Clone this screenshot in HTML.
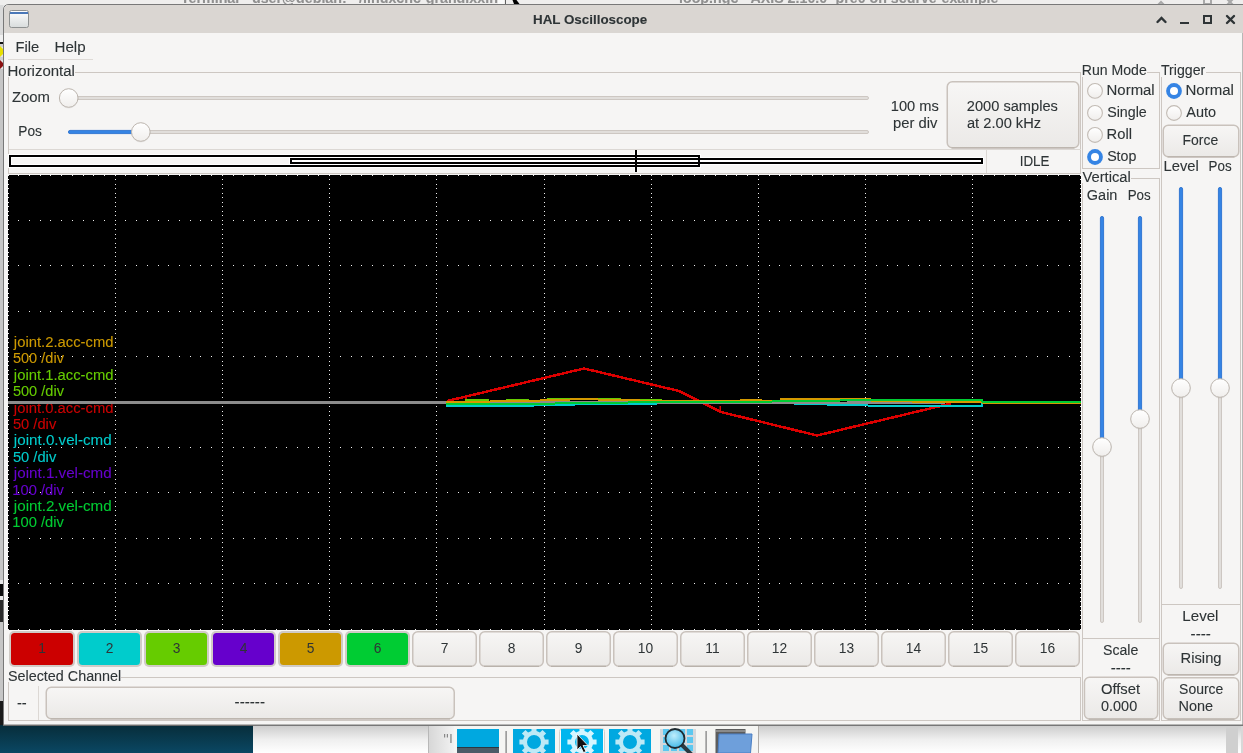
<!DOCTYPE html>
<html><head><meta charset="utf-8"><style>
html,body{margin:0;padding:0;width:1243px;height:753px;overflow:hidden;background:#0e4055}
svg{display:block;will-change:transform}
text{font-family:"Liberation Sans",sans-serif}
</style></head><body>
<svg width="1243" height="753" viewBox="0 0 1243 753">
<defs><linearGradient id="teal" x1="0" y1="0" x2="0" y2="1"><stop offset="0" stop-color="#072d3a"/><stop offset="1" stop-color="#0a4763"/></linearGradient><linearGradient id="panel" x1="0" y1="0" x2="0" y2="1"><stop offset="0" stop-color="#cfcfcf"/><stop offset="0.6" stop-color="#f4f4f4"/><stop offset="1" stop-color="#ffffff"/></linearGradient><linearGradient id="btn" x1="0" y1="0" x2="0" y2="1"><stop offset="0" stop-color="#f7f6f5"/><stop offset="1" stop-color="#ebe9e7"/></linearGradient><linearGradient id="knob" x1="0" y1="0" x2="0" y2="1"><stop offset="0" stop-color="#ffffff"/><stop offset="1" stop-color="#f0eeec"/></linearGradient><linearGradient id="wicon" x1="0" y1="0" x2="0" y2="1"><stop offset="0" stop-color="#ffffff"/><stop offset="1" stop-color="#d8dcdc"/></linearGradient></defs>
<rect x="0" y="0" width="1243" height="753" fill="#e4e4e4" />
<rect x="0" y="0" width="1243" height="5" fill="#efeeed" />
<text x="180.84" y="3.4" font-size="14.5" fill="#909090" textLength="317.04" lengthAdjust="spacingAndGlyphs" font-weight="bold" stroke="#909090" stroke-width="0.1" >Terminal - user@debian: ~/linuxcnc-grandixxin</text>
<text x="679.01" y="3.4" font-size="14.5" fill="#909090" textLength="319.48" lengthAdjust="spacingAndGlyphs" font-weight="bold" stroke="#909090" stroke-width="0.1" >loop.ngc - AXIS 2.10.0~pre0 on scurve-example</text>
<g fill="none" stroke="#a8a8a8" stroke-width="2"><path d="M1157 6 L1161 2 L1165 6"/><rect x="1204" y="-3" width="7" height="7"/><path d="M1226 -2 L1234 6 M1234 -2 L1226 6"/></g>
<rect x="498" y="0" width="6" height="4" fill="#fafafa" />
<rect x="505" y="0" width="1" height="4" fill="#606060" />
<path d="M512.5 0 H516.5 L519.5 4 H514 Z" fill="#000"/>
<rect x="0" y="5" width="3" height="30" fill="#dadada" />
<rect x="0" y="35" width="3" height="7" fill="#f0f0f0" />
<rect x="0" y="42" width="3" height="2" fill="#111" />
<rect x="0" y="44" width="3" height="3" fill="#d0d0d0" />
<path d="M0 46 L3 49 V54 L0 57 Z" fill="#e8e000"/>
<rect x="0" y="57" width="3" height="3" fill="#d0d0d0" />
<path d="M0 60 L3 63 V66 L0 69 Z" fill="#8a1010"/>
<rect x="0" y="69" width="3" height="632" fill="#c6c6c6" />
<rect x="0" y="580" width="3" height="4" fill="#e8e8e8" />
<rect x="0" y="584" width="3" height="12" fill="#0a0a0a" />
<rect x="0" y="596" width="3" height="4" fill="#e8e8e8" />
<rect x="0" y="600" width="3" height="22" fill="#2a2a2a" />
<rect x="0" y="701" width="3" height="24" fill="#1a1a1a" />
<rect x="0" y="725" width="253" height="28" fill="url(#teal)" />
<path d="M3.5 725 V10 Q3.5 4.5 9 4.5 H1243 V725 Z" fill="#f6f5f4" stroke="#787878" stroke-width="1"/>
<path d="M4 33 V10 Q4 5 9 5 H1243 V33 Z" fill="#dad6d2"/>
<rect x="3" y="725" width="1240" height="1" fill="#6a6a6a" />
<rect x="9.5" y="10.5" width="19" height="17" rx="2" fill="url(#wicon)" stroke="#8e9191" stroke-width="1"/>
<rect x="10" y="12" width="18" height="2" fill="#4a78b8" />
<text x="533.01" y="23.9" font-size="12.7" fill="#2e3436" textLength="114.25" lengthAdjust="spacingAndGlyphs" font-weight="bold" stroke="#2e3436" stroke-width="0.1" >HAL Oscilloscope</text>
<path d="M1157.5 22 L1161.5 18 L1165.5 22" fill="none" stroke="#2e3436" stroke-width="2.4" stroke-linecap="round"/>
<rect x="1180" y="22" width="9" height="2" fill="#2e3436" />
<rect x="1204" y="16" width="7" height="7" fill="none" stroke="#2e3436" stroke-width="2"/>
<path d="M1227 16 L1234 23 M1234 16 L1227 23" fill="none" stroke="#2e3436" stroke-width="2.4" stroke-linecap="round"/>
<text x="15.5" y="51.8" font-size="13.8" fill="#2e3436" textLength="23.66" lengthAdjust="spacingAndGlyphs" stroke="#2e3436" stroke-width="0.1" >File</text>
<text x="54.56" y="51.8" font-size="13.8" fill="#2e3436" textLength="31.07" lengthAdjust="spacingAndGlyphs" stroke="#2e3436" stroke-width="0.1" >Help</text>
<rect x="8" y="59" width="85" height="1" fill="#dedad6" />
<text x="7.51" y="76.0" font-size="13.8" fill="#2e3436" textLength="67.39" lengthAdjust="spacingAndGlyphs" stroke="#2e3436" stroke-width="0.1" >Horizontal</text>
<rect x="75" y="72" width="1006" height="1" fill="#cdc7c2" />
<rect x="8" y="77" width="1" height="96" fill="#cdc7c2" />
<rect x="1080" y="72" width="1" height="101" fill="#cdc7c2" />
<rect x="8" y="173" width="1073" height="1" fill="#cdc7c2" />
<text x="12.03" y="102" font-size="13.8" fill="#2e3436" textLength="38.0" lengthAdjust="spacingAndGlyphs" stroke="#2e3436" stroke-width="0.1" >Zoom</text>
<text x="18.28" y="135.8" font-size="13.8" fill="#2e3436" textLength="23.62" lengthAdjust="spacingAndGlyphs" stroke="#2e3436" stroke-width="0.1" >Pos</text>
<rect x="68.5" y="96.5" width="800" height="3" rx="1.5" fill="#e1dedb" stroke="#cdc7c2" stroke-width="1"/>
<circle cx="68.7" cy="98.6" r="9.8" fill="#000" opacity="0.06"/>
<circle cx="68.7" cy="98" r="9.3" fill="url(#knob)" stroke="#bdb6af" stroke-width="1"/>
<rect x="68.5" y="130.5" width="800" height="3" rx="1.5" fill="#e1dedb" stroke="#cdc7c2" stroke-width="1"/>
<rect x="68.4" y="130.4" width="72.00000000000001" height="3.2" rx="1.6" fill="#3584e4" stroke="#2470d4" stroke-width="0.8"/>
<circle cx="140.8" cy="132.6" r="9.8" fill="#000" opacity="0.06"/>
<circle cx="140.8" cy="132" r="9.3" fill="url(#knob)" stroke="#bdb6af" stroke-width="1"/>
<text x="890.78" y="110.9" font-size="13.8" fill="#2e3436" textLength="48.05" lengthAdjust="spacingAndGlyphs" stroke="#2e3436" stroke-width="0.1" >100 ms</text>
<text x="892.95" y="127.9" font-size="13.8" fill="#2e3436" textLength="44.4" lengthAdjust="spacingAndGlyphs" stroke="#2e3436" stroke-width="0.1" >per div</text>
<rect x="947.25" y="81.75" width="131.5" height="66.0" rx="5" fill="url(#btn)" stroke="#c9c2bc" stroke-width="1.5"/>
<path d="M951.5 147.9 H1074.5" stroke="#b9b2ab" stroke-width="1.2"/>
<text x="966.87" y="110.7" font-size="13.8" fill="#2e3436" textLength="90.96" lengthAdjust="spacingAndGlyphs" stroke="#2e3436" stroke-width="0.1" >2000 samples</text>
<text x="966.98" y="127.6" font-size="13.8" fill="#2e3436" textLength="74.15" lengthAdjust="spacingAndGlyphs" stroke="#2e3436" stroke-width="0.1" >at 2.00 kHz</text>
<rect x="9" y="149" width="1072" height="1" fill="#dcd8d4" />
<rect x="986" y="150" width="1" height="23" fill="#dcd8d4" />
<text x="1019.66" y="165.9" font-size="13.8" fill="#2e3436" textLength="29.81" lengthAdjust="spacingAndGlyphs" stroke="#2e3436" stroke-width="0.1" >IDLE</text>
<g fill="none" stroke="#fff" stroke-width="4"><rect x="10" y="156" width="689" height="10"/><rect x="291" y="159" width="691" height="4"/><line x1="636" y1="150" x2="636" y2="172"/></g>
<g fill="none" stroke="#000" stroke-width="2"><rect x="10" y="156" width="689" height="10"/><rect x="291" y="159" width="691" height="4"/><line x1="636" y1="150" x2="636" y2="172"/></g>
<text x="1081.85" y="74.75" font-size="13.8" fill="#2e3436" textLength="64.88" lengthAdjust="spacingAndGlyphs" stroke="#2e3436" stroke-width="0.1" >Run Mode</text>
<rect x="1147" y="72" width="13" height="1" fill="#cdc7c2" />
<rect x="1082" y="77" width="1" height="92" fill="#cdc7c2" />
<rect x="1159" y="72" width="1" height="97" fill="#cdc7c2" />
<rect x="1082" y="168" width="78" height="1" fill="#cdc7c2" />
<circle cx="1095" cy="90.9" r="7.4" fill="url(#knob)" stroke="#c2bbb4" stroke-width="1.1"/>
<text x="1106.58" y="94.75" font-size="13.8" fill="#2e3436" textLength="48.12" lengthAdjust="spacingAndGlyphs" stroke="#2e3436" stroke-width="0.1" >Normal</text>
<circle cx="1095" cy="112.93" r="7.4" fill="url(#knob)" stroke="#c2bbb4" stroke-width="1.1"/>
<text x="1107.15" y="116.78" font-size="13.8" fill="#2e3436" textLength="39.58" lengthAdjust="spacingAndGlyphs" stroke="#2e3436" stroke-width="0.1" >Single</text>
<circle cx="1095" cy="134.96" r="7.4" fill="url(#knob)" stroke="#c2bbb4" stroke-width="1.1"/>
<text x="1106.59" y="138.81" font-size="13.8" fill="#2e3436" textLength="25.4" lengthAdjust="spacingAndGlyphs" stroke="#2e3436" stroke-width="0.1" >Roll</text>
<circle cx="1095" cy="156.99" r="7.9" fill="#3584e4"/>
<circle cx="1095" cy="156.99" r="4" fill="#fff"/>
<text x="1107.15" y="160.84" font-size="13.8" fill="#2e3436" textLength="29.24" lengthAdjust="spacingAndGlyphs" stroke="#2e3436" stroke-width="0.1" >Stop</text>
<text x="1160.99" y="74.75" font-size="13.8" fill="#2e3436" textLength="44.25" lengthAdjust="spacingAndGlyphs" stroke="#2e3436" stroke-width="0.1" >Trigger</text>
<rect x="1206" y="72" width="35" height="1" fill="#cdc7c2" />
<rect x="1161" y="77" width="1" height="644" fill="#cdc7c2" />
<rect x="1240" y="72" width="1" height="649" fill="#cdc7c2" />
<circle cx="1174" cy="91" r="7.9" fill="#3584e4"/>
<circle cx="1174" cy="91" r="4" fill="#fff"/>
<text x="1185.47" y="94.75" font-size="13.8" fill="#2e3436" textLength="48.44" lengthAdjust="spacingAndGlyphs" stroke="#2e3436" stroke-width="0.1" >Normal</text>
<circle cx="1174" cy="113" r="7.4" fill="url(#knob)" stroke="#c2bbb4" stroke-width="1.1"/>
<text x="1186.27" y="116.8" font-size="13.8" fill="#2e3436" textLength="29.74" lengthAdjust="spacingAndGlyphs" stroke="#2e3436" stroke-width="0.1" >Auto</text>
<rect x="1163.25" y="125.25" width="75.5" height="31.5" rx="5" fill="url(#btn)" stroke="#c9c2bc" stroke-width="1.5"/>
<path d="M1167.5 156.9 H1234.5" stroke="#b9b2ab" stroke-width="1.2"/>
<text x="1182.56" y="144.9" font-size="13.8" fill="#2e3436" textLength="35.66" lengthAdjust="spacingAndGlyphs" stroke="#2e3436" stroke-width="0.1" >Force</text>
<text x="1163.59" y="170.6" font-size="13.8" fill="#2e3436" textLength="35.19" lengthAdjust="spacingAndGlyphs" stroke="#2e3436" stroke-width="0.1" >Level</text>
<text x="1208.5" y="170.6" font-size="13.8" fill="#2e3436" textLength="23.08" lengthAdjust="spacingAndGlyphs" stroke="#2e3436" stroke-width="0.1" >Pos</text>
<rect x="1179.5" y="187.5" width="3" height="401" rx="1.5" fill="#e1dedb" stroke="#cdc7c2" stroke-width="1"/>
<rect x="1179.4" y="187.4" width="3.2" height="200.2" rx="1.6" fill="#3584e4" stroke="#2470d4" stroke-width="0.8"/>
<circle cx="1181" cy="388.6" r="9.8" fill="#000" opacity="0.06"/>
<circle cx="1181" cy="388" r="9.3" fill="url(#knob)" stroke="#bdb6af" stroke-width="1"/>
<rect x="1218.5" y="187.5" width="3" height="401" rx="1.5" fill="#e1dedb" stroke="#cdc7c2" stroke-width="1"/>
<rect x="1218.4" y="187.4" width="3.2" height="200.2" rx="1.6" fill="#3584e4" stroke="#2470d4" stroke-width="0.8"/>
<circle cx="1220" cy="388.6" r="9.8" fill="#000" opacity="0.06"/>
<circle cx="1220" cy="388" r="9.3" fill="url(#knob)" stroke="#bdb6af" stroke-width="1"/>
<rect x="1162" y="604" width="78" height="1" fill="#cdc7c2" />
<text x="1182.36" y="621" font-size="13.8" fill="#2e3436" textLength="36.05" lengthAdjust="spacingAndGlyphs" stroke="#2e3436" stroke-width="0.1" >Level</text>
<text x="1190.62" y="639.2" font-size="13.8" fill="#2e3436" textLength="20.25" lengthAdjust="spacingAndGlyphs" stroke="#2e3436" stroke-width="0.1" >----</text>
<rect x="1163.25" y="643.25" width="75.5" height="31.5" rx="5" fill="url(#btn)" stroke="#c9c2bc" stroke-width="1.5"/>
<path d="M1167.5 674.9 H1234.5" stroke="#b9b2ab" stroke-width="1.2"/>
<text x="1180.59" y="663.2" font-size="13.8" fill="#2e3436" textLength="40.96" lengthAdjust="spacingAndGlyphs" stroke="#2e3436" stroke-width="0.1" >Rising</text>
<rect x="1163.25" y="677.75" width="75.5" height="41.200000000000045" rx="5" fill="url(#btn)" stroke="#c9c2bc" stroke-width="1.5"/>
<path d="M1167.5 719.1 H1234.5" stroke="#b9b2ab" stroke-width="1.2"/>
<text x="1179.07" y="693.8" font-size="13.8" fill="#2e3436" textLength="44.25" lengthAdjust="spacingAndGlyphs" stroke="#2e3436" stroke-width="0.1" >Source</text>
<text x="1178.52" y="710.8" font-size="13.8" fill="#2e3436" textLength="34.53" lengthAdjust="spacingAndGlyphs" stroke="#2e3436" stroke-width="0.1" >None</text>
<rect x="1161" y="720" width="80" height="1" fill="#cdc7c2" />
<text x="1082.44" y="181.95" font-size="13.8" fill="#2e3436" textLength="48.33" lengthAdjust="spacingAndGlyphs" stroke="#2e3436" stroke-width="0.1" >Vertical</text>
<rect x="1131" y="178" width="29" height="1" fill="#cdc7c2" />
<rect x="1082" y="183" width="1" height="538" fill="#cdc7c2" />
<rect x="1159" y="178" width="1" height="543" fill="#cdc7c2" />
<rect x="1082" y="720" width="78" height="1" fill="#cdc7c2" />
<text x="1086.87" y="199.9" font-size="13.8" fill="#2e3436" textLength="30.57" lengthAdjust="spacingAndGlyphs" stroke="#2e3436" stroke-width="0.1" >Gain</text>
<text x="1127.7" y="199.9" font-size="13.8" fill="#2e3436" textLength="23.03" lengthAdjust="spacingAndGlyphs" stroke="#2e3436" stroke-width="0.1" >Pos</text>
<rect x="1100.5" y="216.5" width="3" height="406" rx="1.5" fill="#e1dedb" stroke="#cdc7c2" stroke-width="1"/>
<rect x="1100.4" y="216.4" width="3.2" height="230.2" rx="1.6" fill="#3584e4" stroke="#2470d4" stroke-width="0.8"/>
<circle cx="1102" cy="447.6" r="9.8" fill="#000" opacity="0.06"/>
<circle cx="1102" cy="447" r="9.3" fill="url(#knob)" stroke="#bdb6af" stroke-width="1"/>
<rect x="1138.5" y="216.5" width="3" height="406" rx="1.5" fill="#e1dedb" stroke="#cdc7c2" stroke-width="1"/>
<rect x="1138.4" y="216.4" width="3.2" height="202.2" rx="1.6" fill="#3584e4" stroke="#2470d4" stroke-width="0.8"/>
<circle cx="1140" cy="419.6" r="9.8" fill="#000" opacity="0.06"/>
<circle cx="1140" cy="419" r="9.3" fill="url(#knob)" stroke="#bdb6af" stroke-width="1"/>
<rect x="1083" y="638" width="76" height="1" fill="#cdc7c2" />
<text x="1102.96" y="655.1" font-size="13.8" fill="#2e3436" textLength="35.37" lengthAdjust="spacingAndGlyphs" stroke="#2e3436" stroke-width="0.1" >Scale</text>
<text x="1110.83" y="672.5" font-size="13.8" fill="#2e3436" textLength="20.04" lengthAdjust="spacingAndGlyphs" stroke="#2e3436" stroke-width="0.1" >----</text>
<rect x="1084.45" y="677.25" width="73.20000000000005" height="41.700000000000045" rx="5" fill="url(#btn)" stroke="#c9c2bc" stroke-width="1.5"/>
<path d="M1088.7 719.1 H1153.4" stroke="#b9b2ab" stroke-width="1.2"/>
<text x="1100.9" y="693.8" font-size="13.8" fill="#2e3436" textLength="39.2" lengthAdjust="spacingAndGlyphs" stroke="#2e3436" stroke-width="0.1" >Offset</text>
<text x="1101.04" y="710.8" font-size="13.8" fill="#2e3436" textLength="36.13" lengthAdjust="spacingAndGlyphs" stroke="#2e3436" stroke-width="0.1" >0.000</text>
<rect x="9" y="631" width="66" height="36" rx="5" fill="#d0cbc6"/>
<rect x="11" y="633" width="62" height="32" rx="3.5" fill="#cc0000"/>
<text x="42.0" y="652.7" font-size="13.8" fill="#2e3436" text-anchor="middle">1</text>
<rect x="77" y="631" width="65" height="36" rx="5" fill="#d0cbc6"/>
<rect x="79" y="633" width="61" height="32" rx="3.5" fill="#00cccc"/>
<text x="109.5" y="652.7" font-size="13.8" fill="#2e3436" text-anchor="middle">2</text>
<rect x="144" y="631" width="65" height="36" rx="5" fill="#d0cbc6"/>
<rect x="146" y="633" width="61" height="32" rx="3.5" fill="#66cc00"/>
<text x="176.5" y="652.7" font-size="13.8" fill="#2e3436" text-anchor="middle">3</text>
<rect x="211" y="631" width="65" height="36" rx="5" fill="#d0cbc6"/>
<rect x="213" y="633" width="61" height="32" rx="3.5" fill="#6600cc"/>
<text x="243.5" y="652.7" font-size="13.8" fill="#2e3436" text-anchor="middle">4</text>
<rect x="278" y="631" width="65" height="36" rx="5" fill="#d0cbc6"/>
<rect x="280" y="633" width="61" height="32" rx="3.5" fill="#cc9900"/>
<text x="310.5" y="652.7" font-size="13.8" fill="#2e3436" text-anchor="middle">5</text>
<rect x="345" y="631" width="65" height="36" rx="5" fill="#d0cbc6"/>
<rect x="347" y="633" width="61" height="32" rx="3.5" fill="#00cc33"/>
<text x="377.5" y="652.7" font-size="13.8" fill="#2e3436" text-anchor="middle">6</text>
<rect x="412.75" y="631.75" width="63.5" height="34.5" rx="5" fill="url(#btn)" stroke="#c9c2bc" stroke-width="1.5"/>
<path d="M417 666.4 H472" stroke="#b9b2ab" stroke-width="1.2"/>
<text x="444.5" y="652.7" font-size="13.8" fill="#2e3436" text-anchor="middle">7</text>
<rect x="479.75" y="631.75" width="63.5" height="34.5" rx="5" fill="url(#btn)" stroke="#c9c2bc" stroke-width="1.5"/>
<path d="M484 666.4 H539" stroke="#b9b2ab" stroke-width="1.2"/>
<text x="511.5" y="652.7" font-size="13.8" fill="#2e3436" text-anchor="middle">8</text>
<rect x="546.75" y="631.75" width="63.5" height="34.5" rx="5" fill="url(#btn)" stroke="#c9c2bc" stroke-width="1.5"/>
<path d="M551 666.4 H606" stroke="#b9b2ab" stroke-width="1.2"/>
<text x="578.5" y="652.7" font-size="13.8" fill="#2e3436" text-anchor="middle">9</text>
<rect x="613.75" y="631.75" width="63.5" height="34.5" rx="5" fill="url(#btn)" stroke="#c9c2bc" stroke-width="1.5"/>
<path d="M618 666.4 H673" stroke="#b9b2ab" stroke-width="1.2"/>
<text x="645.5" y="652.7" font-size="13.8" fill="#2e3436" text-anchor="middle">10</text>
<rect x="680.75" y="631.75" width="63.5" height="34.5" rx="5" fill="url(#btn)" stroke="#c9c2bc" stroke-width="1.5"/>
<path d="M685 666.4 H740" stroke="#b9b2ab" stroke-width="1.2"/>
<text x="712.5" y="652.7" font-size="13.8" fill="#2e3436" text-anchor="middle">11</text>
<rect x="747.75" y="631.75" width="63.5" height="34.5" rx="5" fill="url(#btn)" stroke="#c9c2bc" stroke-width="1.5"/>
<path d="M752 666.4 H807" stroke="#b9b2ab" stroke-width="1.2"/>
<text x="779.5" y="652.7" font-size="13.8" fill="#2e3436" text-anchor="middle">12</text>
<rect x="814.75" y="631.75" width="63.5" height="34.5" rx="5" fill="url(#btn)" stroke="#c9c2bc" stroke-width="1.5"/>
<path d="M819 666.4 H874" stroke="#b9b2ab" stroke-width="1.2"/>
<text x="846.5" y="652.7" font-size="13.8" fill="#2e3436" text-anchor="middle">13</text>
<rect x="881.75" y="631.75" width="63.5" height="34.5" rx="5" fill="url(#btn)" stroke="#c9c2bc" stroke-width="1.5"/>
<path d="M886 666.4 H941" stroke="#b9b2ab" stroke-width="1.2"/>
<text x="913.5" y="652.7" font-size="13.8" fill="#2e3436" text-anchor="middle">14</text>
<rect x="948.75" y="631.75" width="63.5" height="34.5" rx="5" fill="url(#btn)" stroke="#c9c2bc" stroke-width="1.5"/>
<path d="M953 666.4 H1008" stroke="#b9b2ab" stroke-width="1.2"/>
<text x="980.5" y="652.7" font-size="13.8" fill="#2e3436" text-anchor="middle">15</text>
<rect x="1015.75" y="631.75" width="63.5" height="34.5" rx="5" fill="url(#btn)" stroke="#c9c2bc" stroke-width="1.5"/>
<path d="M1020 666.4 H1075" stroke="#b9b2ab" stroke-width="1.2"/>
<text x="1047.5" y="652.7" font-size="13.8" fill="#2e3436" text-anchor="middle">16</text>
<text x="7.95" y="680.9" font-size="13.8" fill="#2e3436" textLength="113.31" lengthAdjust="spacingAndGlyphs" stroke="#2e3436" stroke-width="0.1" >Selected Channel</text>
<rect x="121" y="677" width="960" height="1" fill="#cdc7c2" />
<rect x="8" y="682" width="1" height="39" fill="#cdc7c2" />
<rect x="1080" y="677" width="1" height="44" fill="#cdc7c2" />
<rect x="8" y="720" width="1073" height="1" fill="#cdc7c2" />
<text x="16.95" y="707.8" font-size="13.8" fill="#2e3436" textLength="9.81" lengthAdjust="spacingAndGlyphs" stroke="#2e3436" stroke-width="0.1" >--</text>
<rect x="38" y="686" width="1" height="34" fill="#dcd8d4" />
<rect x="46.25" y="687.25" width="408.0" height="31.5" rx="5" fill="url(#btn)" stroke="#c9c2bc" stroke-width="1.5"/>
<path d="M50.5 718.9 H450" stroke="#b9b2ab" stroke-width="1.2"/>
<text x="234.63" y="707.4" font-size="13.8" fill="#2e3436" textLength="30.35" lengthAdjust="spacingAndGlyphs" stroke="#2e3436" stroke-width="0.1" >------</text>
<rect x="8" y="175" width="1073" height="455" fill="#000"/>
<path fill="#f0f0f0" d="M8 175h1v1h-1zM8 179h1v1h-1zM8 184h1v1h-1zM8 188h1v1h-1zM8 193h1v1h-1zM8 197h1v1h-1zM8 202h1v1h-1zM8 206h1v1h-1zM8 211h1v1h-1zM8 215h1v1h-1zM8 220h1v1h-1zM8 224h1v1h-1zM8 229h1v1h-1zM8 234h1v1h-1zM8 238h1v1h-1zM8 243h1v1h-1zM8 247h1v1h-1zM8 252h1v1h-1zM8 256h1v1h-1zM8 261h1v1h-1zM8 265h1v1h-1zM8 270h1v1h-1zM8 274h1v1h-1zM8 279h1v1h-1zM8 283h1v1h-1zM8 288h1v1h-1zM8 293h1v1h-1zM8 297h1v1h-1zM8 302h1v1h-1zM8 306h1v1h-1zM8 311h1v1h-1zM8 315h1v1h-1zM8 320h1v1h-1zM8 324h1v1h-1zM8 329h1v1h-1zM8 333h1v1h-1zM8 338h1v1h-1zM8 342h1v1h-1zM8 347h1v1h-1zM8 352h1v1h-1zM8 356h1v1h-1zM8 361h1v1h-1zM8 365h1v1h-1zM8 370h1v1h-1zM8 374h1v1h-1zM8 379h1v1h-1zM8 383h1v1h-1zM8 388h1v1h-1zM8 392h1v1h-1zM8 397h1v1h-1zM8 402h1v1h-1zM8 406h1v1h-1zM8 411h1v1h-1zM8 415h1v1h-1zM8 420h1v1h-1zM8 424h1v1h-1zM8 429h1v1h-1zM8 433h1v1h-1zM8 438h1v1h-1zM8 442h1v1h-1zM8 447h1v1h-1zM8 451h1v1h-1zM8 456h1v1h-1zM8 461h1v1h-1zM8 465h1v1h-1zM8 470h1v1h-1zM8 474h1v1h-1zM8 479h1v1h-1zM8 483h1v1h-1zM8 488h1v1h-1zM8 492h1v1h-1zM8 497h1v1h-1zM8 501h1v1h-1zM8 506h1v1h-1zM8 510h1v1h-1zM8 515h1v1h-1zM8 520h1v1h-1zM8 524h1v1h-1zM8 529h1v1h-1zM8 533h1v1h-1zM8 538h1v1h-1zM8 542h1v1h-1zM8 547h1v1h-1zM8 551h1v1h-1zM8 556h1v1h-1zM8 560h1v1h-1zM8 565h1v1h-1zM8 569h1v1h-1zM8 574h1v1h-1zM8 579h1v1h-1zM8 583h1v1h-1zM8 588h1v1h-1zM8 592h1v1h-1zM8 597h1v1h-1zM8 601h1v1h-1zM8 606h1v1h-1zM8 610h1v1h-1zM8 615h1v1h-1zM8 619h1v1h-1zM8 624h1v1h-1zM8 629h1v1h-1zM115 175h1v1h-1zM115 179h1v1h-1zM115 184h1v1h-1zM115 188h1v1h-1zM115 193h1v1h-1zM115 197h1v1h-1zM115 202h1v1h-1zM115 206h1v1h-1zM115 211h1v1h-1zM115 215h1v1h-1zM115 220h1v1h-1zM115 224h1v1h-1zM115 229h1v1h-1zM115 234h1v1h-1zM115 238h1v1h-1zM115 243h1v1h-1zM115 247h1v1h-1zM115 252h1v1h-1zM115 256h1v1h-1zM115 261h1v1h-1zM115 265h1v1h-1zM115 270h1v1h-1zM115 274h1v1h-1zM115 279h1v1h-1zM115 283h1v1h-1zM115 288h1v1h-1zM115 293h1v1h-1zM115 297h1v1h-1zM115 302h1v1h-1zM115 306h1v1h-1zM115 311h1v1h-1zM115 315h1v1h-1zM115 320h1v1h-1zM115 324h1v1h-1zM115 329h1v1h-1zM115 333h1v1h-1zM115 338h1v1h-1zM115 342h1v1h-1zM115 347h1v1h-1zM115 352h1v1h-1zM115 356h1v1h-1zM115 361h1v1h-1zM115 365h1v1h-1zM115 370h1v1h-1zM115 374h1v1h-1zM115 379h1v1h-1zM115 383h1v1h-1zM115 388h1v1h-1zM115 392h1v1h-1zM115 397h1v1h-1zM115 402h1v1h-1zM115 406h1v1h-1zM115 411h1v1h-1zM115 415h1v1h-1zM115 420h1v1h-1zM115 424h1v1h-1zM115 429h1v1h-1zM115 433h1v1h-1zM115 438h1v1h-1zM115 442h1v1h-1zM115 447h1v1h-1zM115 451h1v1h-1zM115 456h1v1h-1zM115 461h1v1h-1zM115 465h1v1h-1zM115 470h1v1h-1zM115 474h1v1h-1zM115 479h1v1h-1zM115 483h1v1h-1zM115 488h1v1h-1zM115 492h1v1h-1zM115 497h1v1h-1zM115 501h1v1h-1zM115 506h1v1h-1zM115 510h1v1h-1zM115 515h1v1h-1zM115 520h1v1h-1zM115 524h1v1h-1zM115 529h1v1h-1zM115 533h1v1h-1zM115 538h1v1h-1zM115 542h1v1h-1zM115 547h1v1h-1zM115 551h1v1h-1zM115 556h1v1h-1zM115 560h1v1h-1zM115 565h1v1h-1zM115 569h1v1h-1zM115 574h1v1h-1zM115 579h1v1h-1zM115 583h1v1h-1zM115 588h1v1h-1zM115 592h1v1h-1zM115 597h1v1h-1zM115 601h1v1h-1zM115 606h1v1h-1zM115 610h1v1h-1zM115 615h1v1h-1zM115 619h1v1h-1zM115 624h1v1h-1zM115 629h1v1h-1zM222 175h1v1h-1zM222 179h1v1h-1zM222 184h1v1h-1zM222 188h1v1h-1zM222 193h1v1h-1zM222 197h1v1h-1zM222 202h1v1h-1zM222 206h1v1h-1zM222 211h1v1h-1zM222 215h1v1h-1zM222 220h1v1h-1zM222 224h1v1h-1zM222 229h1v1h-1zM222 234h1v1h-1zM222 238h1v1h-1zM222 243h1v1h-1zM222 247h1v1h-1zM222 252h1v1h-1zM222 256h1v1h-1zM222 261h1v1h-1zM222 265h1v1h-1zM222 270h1v1h-1zM222 274h1v1h-1zM222 279h1v1h-1zM222 283h1v1h-1zM222 288h1v1h-1zM222 293h1v1h-1zM222 297h1v1h-1zM222 302h1v1h-1zM222 306h1v1h-1zM222 311h1v1h-1zM222 315h1v1h-1zM222 320h1v1h-1zM222 324h1v1h-1zM222 329h1v1h-1zM222 333h1v1h-1zM222 338h1v1h-1zM222 342h1v1h-1zM222 347h1v1h-1zM222 352h1v1h-1zM222 356h1v1h-1zM222 361h1v1h-1zM222 365h1v1h-1zM222 370h1v1h-1zM222 374h1v1h-1zM222 379h1v1h-1zM222 383h1v1h-1zM222 388h1v1h-1zM222 392h1v1h-1zM222 397h1v1h-1zM222 402h1v1h-1zM222 406h1v1h-1zM222 411h1v1h-1zM222 415h1v1h-1zM222 420h1v1h-1zM222 424h1v1h-1zM222 429h1v1h-1zM222 433h1v1h-1zM222 438h1v1h-1zM222 442h1v1h-1zM222 447h1v1h-1zM222 451h1v1h-1zM222 456h1v1h-1zM222 461h1v1h-1zM222 465h1v1h-1zM222 470h1v1h-1zM222 474h1v1h-1zM222 479h1v1h-1zM222 483h1v1h-1zM222 488h1v1h-1zM222 492h1v1h-1zM222 497h1v1h-1zM222 501h1v1h-1zM222 506h1v1h-1zM222 510h1v1h-1zM222 515h1v1h-1zM222 520h1v1h-1zM222 524h1v1h-1zM222 529h1v1h-1zM222 533h1v1h-1zM222 538h1v1h-1zM222 542h1v1h-1zM222 547h1v1h-1zM222 551h1v1h-1zM222 556h1v1h-1zM222 560h1v1h-1zM222 565h1v1h-1zM222 569h1v1h-1zM222 574h1v1h-1zM222 579h1v1h-1zM222 583h1v1h-1zM222 588h1v1h-1zM222 592h1v1h-1zM222 597h1v1h-1zM222 601h1v1h-1zM222 606h1v1h-1zM222 610h1v1h-1zM222 615h1v1h-1zM222 619h1v1h-1zM222 624h1v1h-1zM222 629h1v1h-1zM329 175h1v1h-1zM329 179h1v1h-1zM329 184h1v1h-1zM329 188h1v1h-1zM329 193h1v1h-1zM329 197h1v1h-1zM329 202h1v1h-1zM329 206h1v1h-1zM329 211h1v1h-1zM329 215h1v1h-1zM329 220h1v1h-1zM329 224h1v1h-1zM329 229h1v1h-1zM329 234h1v1h-1zM329 238h1v1h-1zM329 243h1v1h-1zM329 247h1v1h-1zM329 252h1v1h-1zM329 256h1v1h-1zM329 261h1v1h-1zM329 265h1v1h-1zM329 270h1v1h-1zM329 274h1v1h-1zM329 279h1v1h-1zM329 283h1v1h-1zM329 288h1v1h-1zM329 293h1v1h-1zM329 297h1v1h-1zM329 302h1v1h-1zM329 306h1v1h-1zM329 311h1v1h-1zM329 315h1v1h-1zM329 320h1v1h-1zM329 324h1v1h-1zM329 329h1v1h-1zM329 333h1v1h-1zM329 338h1v1h-1zM329 342h1v1h-1zM329 347h1v1h-1zM329 352h1v1h-1zM329 356h1v1h-1zM329 361h1v1h-1zM329 365h1v1h-1zM329 370h1v1h-1zM329 374h1v1h-1zM329 379h1v1h-1zM329 383h1v1h-1zM329 388h1v1h-1zM329 392h1v1h-1zM329 397h1v1h-1zM329 402h1v1h-1zM329 406h1v1h-1zM329 411h1v1h-1zM329 415h1v1h-1zM329 420h1v1h-1zM329 424h1v1h-1zM329 429h1v1h-1zM329 433h1v1h-1zM329 438h1v1h-1zM329 442h1v1h-1zM329 447h1v1h-1zM329 451h1v1h-1zM329 456h1v1h-1zM329 461h1v1h-1zM329 465h1v1h-1zM329 470h1v1h-1zM329 474h1v1h-1zM329 479h1v1h-1zM329 483h1v1h-1zM329 488h1v1h-1zM329 492h1v1h-1zM329 497h1v1h-1zM329 501h1v1h-1zM329 506h1v1h-1zM329 510h1v1h-1zM329 515h1v1h-1zM329 520h1v1h-1zM329 524h1v1h-1zM329 529h1v1h-1zM329 533h1v1h-1zM329 538h1v1h-1zM329 542h1v1h-1zM329 547h1v1h-1zM329 551h1v1h-1zM329 556h1v1h-1zM329 560h1v1h-1zM329 565h1v1h-1zM329 569h1v1h-1zM329 574h1v1h-1zM329 579h1v1h-1zM329 583h1v1h-1zM329 588h1v1h-1zM329 592h1v1h-1zM329 597h1v1h-1zM329 601h1v1h-1zM329 606h1v1h-1zM329 610h1v1h-1zM329 615h1v1h-1zM329 619h1v1h-1zM329 624h1v1h-1zM329 629h1v1h-1zM436 175h1v1h-1zM436 179h1v1h-1zM436 184h1v1h-1zM436 188h1v1h-1zM436 193h1v1h-1zM436 197h1v1h-1zM436 202h1v1h-1zM436 206h1v1h-1zM436 211h1v1h-1zM436 215h1v1h-1zM436 220h1v1h-1zM436 224h1v1h-1zM436 229h1v1h-1zM436 234h1v1h-1zM436 238h1v1h-1zM436 243h1v1h-1zM436 247h1v1h-1zM436 252h1v1h-1zM436 256h1v1h-1zM436 261h1v1h-1zM436 265h1v1h-1zM436 270h1v1h-1zM436 274h1v1h-1zM436 279h1v1h-1zM436 283h1v1h-1zM436 288h1v1h-1zM436 293h1v1h-1zM436 297h1v1h-1zM436 302h1v1h-1zM436 306h1v1h-1zM436 311h1v1h-1zM436 315h1v1h-1zM436 320h1v1h-1zM436 324h1v1h-1zM436 329h1v1h-1zM436 333h1v1h-1zM436 338h1v1h-1zM436 342h1v1h-1zM436 347h1v1h-1zM436 352h1v1h-1zM436 356h1v1h-1zM436 361h1v1h-1zM436 365h1v1h-1zM436 370h1v1h-1zM436 374h1v1h-1zM436 379h1v1h-1zM436 383h1v1h-1zM436 388h1v1h-1zM436 392h1v1h-1zM436 397h1v1h-1zM436 402h1v1h-1zM436 406h1v1h-1zM436 411h1v1h-1zM436 415h1v1h-1zM436 420h1v1h-1zM436 424h1v1h-1zM436 429h1v1h-1zM436 433h1v1h-1zM436 438h1v1h-1zM436 442h1v1h-1zM436 447h1v1h-1zM436 451h1v1h-1zM436 456h1v1h-1zM436 461h1v1h-1zM436 465h1v1h-1zM436 470h1v1h-1zM436 474h1v1h-1zM436 479h1v1h-1zM436 483h1v1h-1zM436 488h1v1h-1zM436 492h1v1h-1zM436 497h1v1h-1zM436 501h1v1h-1zM436 506h1v1h-1zM436 510h1v1h-1zM436 515h1v1h-1zM436 520h1v1h-1zM436 524h1v1h-1zM436 529h1v1h-1zM436 533h1v1h-1zM436 538h1v1h-1zM436 542h1v1h-1zM436 547h1v1h-1zM436 551h1v1h-1zM436 556h1v1h-1zM436 560h1v1h-1zM436 565h1v1h-1zM436 569h1v1h-1zM436 574h1v1h-1zM436 579h1v1h-1zM436 583h1v1h-1zM436 588h1v1h-1zM436 592h1v1h-1zM436 597h1v1h-1zM436 601h1v1h-1zM436 606h1v1h-1zM436 610h1v1h-1zM436 615h1v1h-1zM436 619h1v1h-1zM436 624h1v1h-1zM436 629h1v1h-1zM544 175h1v1h-1zM544 179h1v1h-1zM544 184h1v1h-1zM544 188h1v1h-1zM544 193h1v1h-1zM544 197h1v1h-1zM544 202h1v1h-1zM544 206h1v1h-1zM544 211h1v1h-1zM544 215h1v1h-1zM544 220h1v1h-1zM544 224h1v1h-1zM544 229h1v1h-1zM544 234h1v1h-1zM544 238h1v1h-1zM544 243h1v1h-1zM544 247h1v1h-1zM544 252h1v1h-1zM544 256h1v1h-1zM544 261h1v1h-1zM544 265h1v1h-1zM544 270h1v1h-1zM544 274h1v1h-1zM544 279h1v1h-1zM544 283h1v1h-1zM544 288h1v1h-1zM544 293h1v1h-1zM544 297h1v1h-1zM544 302h1v1h-1zM544 306h1v1h-1zM544 311h1v1h-1zM544 315h1v1h-1zM544 320h1v1h-1zM544 324h1v1h-1zM544 329h1v1h-1zM544 333h1v1h-1zM544 338h1v1h-1zM544 342h1v1h-1zM544 347h1v1h-1zM544 352h1v1h-1zM544 356h1v1h-1zM544 361h1v1h-1zM544 365h1v1h-1zM544 370h1v1h-1zM544 374h1v1h-1zM544 379h1v1h-1zM544 383h1v1h-1zM544 388h1v1h-1zM544 392h1v1h-1zM544 397h1v1h-1zM544 402h1v1h-1zM544 406h1v1h-1zM544 411h1v1h-1zM544 415h1v1h-1zM544 420h1v1h-1zM544 424h1v1h-1zM544 429h1v1h-1zM544 433h1v1h-1zM544 438h1v1h-1zM544 442h1v1h-1zM544 447h1v1h-1zM544 451h1v1h-1zM544 456h1v1h-1zM544 461h1v1h-1zM544 465h1v1h-1zM544 470h1v1h-1zM544 474h1v1h-1zM544 479h1v1h-1zM544 483h1v1h-1zM544 488h1v1h-1zM544 492h1v1h-1zM544 497h1v1h-1zM544 501h1v1h-1zM544 506h1v1h-1zM544 510h1v1h-1zM544 515h1v1h-1zM544 520h1v1h-1zM544 524h1v1h-1zM544 529h1v1h-1zM544 533h1v1h-1zM544 538h1v1h-1zM544 542h1v1h-1zM544 547h1v1h-1zM544 551h1v1h-1zM544 556h1v1h-1zM544 560h1v1h-1zM544 565h1v1h-1zM544 569h1v1h-1zM544 574h1v1h-1zM544 579h1v1h-1zM544 583h1v1h-1zM544 588h1v1h-1zM544 592h1v1h-1zM544 597h1v1h-1zM544 601h1v1h-1zM544 606h1v1h-1zM544 610h1v1h-1zM544 615h1v1h-1zM544 619h1v1h-1zM544 624h1v1h-1zM544 629h1v1h-1zM651 175h1v1h-1zM651 179h1v1h-1zM651 184h1v1h-1zM651 188h1v1h-1zM651 193h1v1h-1zM651 197h1v1h-1zM651 202h1v1h-1zM651 206h1v1h-1zM651 211h1v1h-1zM651 215h1v1h-1zM651 220h1v1h-1zM651 224h1v1h-1zM651 229h1v1h-1zM651 234h1v1h-1zM651 238h1v1h-1zM651 243h1v1h-1zM651 247h1v1h-1zM651 252h1v1h-1zM651 256h1v1h-1zM651 261h1v1h-1zM651 265h1v1h-1zM651 270h1v1h-1zM651 274h1v1h-1zM651 279h1v1h-1zM651 283h1v1h-1zM651 288h1v1h-1zM651 293h1v1h-1zM651 297h1v1h-1zM651 302h1v1h-1zM651 306h1v1h-1zM651 311h1v1h-1zM651 315h1v1h-1zM651 320h1v1h-1zM651 324h1v1h-1zM651 329h1v1h-1zM651 333h1v1h-1zM651 338h1v1h-1zM651 342h1v1h-1zM651 347h1v1h-1zM651 352h1v1h-1zM651 356h1v1h-1zM651 361h1v1h-1zM651 365h1v1h-1zM651 370h1v1h-1zM651 374h1v1h-1zM651 379h1v1h-1zM651 383h1v1h-1zM651 388h1v1h-1zM651 392h1v1h-1zM651 397h1v1h-1zM651 402h1v1h-1zM651 406h1v1h-1zM651 411h1v1h-1zM651 415h1v1h-1zM651 420h1v1h-1zM651 424h1v1h-1zM651 429h1v1h-1zM651 433h1v1h-1zM651 438h1v1h-1zM651 442h1v1h-1zM651 447h1v1h-1zM651 451h1v1h-1zM651 456h1v1h-1zM651 461h1v1h-1zM651 465h1v1h-1zM651 470h1v1h-1zM651 474h1v1h-1zM651 479h1v1h-1zM651 483h1v1h-1zM651 488h1v1h-1zM651 492h1v1h-1zM651 497h1v1h-1zM651 501h1v1h-1zM651 506h1v1h-1zM651 510h1v1h-1zM651 515h1v1h-1zM651 520h1v1h-1zM651 524h1v1h-1zM651 529h1v1h-1zM651 533h1v1h-1zM651 538h1v1h-1zM651 542h1v1h-1zM651 547h1v1h-1zM651 551h1v1h-1zM651 556h1v1h-1zM651 560h1v1h-1zM651 565h1v1h-1zM651 569h1v1h-1zM651 574h1v1h-1zM651 579h1v1h-1zM651 583h1v1h-1zM651 588h1v1h-1zM651 592h1v1h-1zM651 597h1v1h-1zM651 601h1v1h-1zM651 606h1v1h-1zM651 610h1v1h-1zM651 615h1v1h-1zM651 619h1v1h-1zM651 624h1v1h-1zM651 629h1v1h-1zM758 175h1v1h-1zM758 179h1v1h-1zM758 184h1v1h-1zM758 188h1v1h-1zM758 193h1v1h-1zM758 197h1v1h-1zM758 202h1v1h-1zM758 206h1v1h-1zM758 211h1v1h-1zM758 215h1v1h-1zM758 220h1v1h-1zM758 224h1v1h-1zM758 229h1v1h-1zM758 234h1v1h-1zM758 238h1v1h-1zM758 243h1v1h-1zM758 247h1v1h-1zM758 252h1v1h-1zM758 256h1v1h-1zM758 261h1v1h-1zM758 265h1v1h-1zM758 270h1v1h-1zM758 274h1v1h-1zM758 279h1v1h-1zM758 283h1v1h-1zM758 288h1v1h-1zM758 293h1v1h-1zM758 297h1v1h-1zM758 302h1v1h-1zM758 306h1v1h-1zM758 311h1v1h-1zM758 315h1v1h-1zM758 320h1v1h-1zM758 324h1v1h-1zM758 329h1v1h-1zM758 333h1v1h-1zM758 338h1v1h-1zM758 342h1v1h-1zM758 347h1v1h-1zM758 352h1v1h-1zM758 356h1v1h-1zM758 361h1v1h-1zM758 365h1v1h-1zM758 370h1v1h-1zM758 374h1v1h-1zM758 379h1v1h-1zM758 383h1v1h-1zM758 388h1v1h-1zM758 392h1v1h-1zM758 397h1v1h-1zM758 402h1v1h-1zM758 406h1v1h-1zM758 411h1v1h-1zM758 415h1v1h-1zM758 420h1v1h-1zM758 424h1v1h-1zM758 429h1v1h-1zM758 433h1v1h-1zM758 438h1v1h-1zM758 442h1v1h-1zM758 447h1v1h-1zM758 451h1v1h-1zM758 456h1v1h-1zM758 461h1v1h-1zM758 465h1v1h-1zM758 470h1v1h-1zM758 474h1v1h-1zM758 479h1v1h-1zM758 483h1v1h-1zM758 488h1v1h-1zM758 492h1v1h-1zM758 497h1v1h-1zM758 501h1v1h-1zM758 506h1v1h-1zM758 510h1v1h-1zM758 515h1v1h-1zM758 520h1v1h-1zM758 524h1v1h-1zM758 529h1v1h-1zM758 533h1v1h-1zM758 538h1v1h-1zM758 542h1v1h-1zM758 547h1v1h-1zM758 551h1v1h-1zM758 556h1v1h-1zM758 560h1v1h-1zM758 565h1v1h-1zM758 569h1v1h-1zM758 574h1v1h-1zM758 579h1v1h-1zM758 583h1v1h-1zM758 588h1v1h-1zM758 592h1v1h-1zM758 597h1v1h-1zM758 601h1v1h-1zM758 606h1v1h-1zM758 610h1v1h-1zM758 615h1v1h-1zM758 619h1v1h-1zM758 624h1v1h-1zM758 629h1v1h-1zM865 175h1v1h-1zM865 179h1v1h-1zM865 184h1v1h-1zM865 188h1v1h-1zM865 193h1v1h-1zM865 197h1v1h-1zM865 202h1v1h-1zM865 206h1v1h-1zM865 211h1v1h-1zM865 215h1v1h-1zM865 220h1v1h-1zM865 224h1v1h-1zM865 229h1v1h-1zM865 234h1v1h-1zM865 238h1v1h-1zM865 243h1v1h-1zM865 247h1v1h-1zM865 252h1v1h-1zM865 256h1v1h-1zM865 261h1v1h-1zM865 265h1v1h-1zM865 270h1v1h-1zM865 274h1v1h-1zM865 279h1v1h-1zM865 283h1v1h-1zM865 288h1v1h-1zM865 293h1v1h-1zM865 297h1v1h-1zM865 302h1v1h-1zM865 306h1v1h-1zM865 311h1v1h-1zM865 315h1v1h-1zM865 320h1v1h-1zM865 324h1v1h-1zM865 329h1v1h-1zM865 333h1v1h-1zM865 338h1v1h-1zM865 342h1v1h-1zM865 347h1v1h-1zM865 352h1v1h-1zM865 356h1v1h-1zM865 361h1v1h-1zM865 365h1v1h-1zM865 370h1v1h-1zM865 374h1v1h-1zM865 379h1v1h-1zM865 383h1v1h-1zM865 388h1v1h-1zM865 392h1v1h-1zM865 397h1v1h-1zM865 402h1v1h-1zM865 406h1v1h-1zM865 411h1v1h-1zM865 415h1v1h-1zM865 420h1v1h-1zM865 424h1v1h-1zM865 429h1v1h-1zM865 433h1v1h-1zM865 438h1v1h-1zM865 442h1v1h-1zM865 447h1v1h-1zM865 451h1v1h-1zM865 456h1v1h-1zM865 461h1v1h-1zM865 465h1v1h-1zM865 470h1v1h-1zM865 474h1v1h-1zM865 479h1v1h-1zM865 483h1v1h-1zM865 488h1v1h-1zM865 492h1v1h-1zM865 497h1v1h-1zM865 501h1v1h-1zM865 506h1v1h-1zM865 510h1v1h-1zM865 515h1v1h-1zM865 520h1v1h-1zM865 524h1v1h-1zM865 529h1v1h-1zM865 533h1v1h-1zM865 538h1v1h-1zM865 542h1v1h-1zM865 547h1v1h-1zM865 551h1v1h-1zM865 556h1v1h-1zM865 560h1v1h-1zM865 565h1v1h-1zM865 569h1v1h-1zM865 574h1v1h-1zM865 579h1v1h-1zM865 583h1v1h-1zM865 588h1v1h-1zM865 592h1v1h-1zM865 597h1v1h-1zM865 601h1v1h-1zM865 606h1v1h-1zM865 610h1v1h-1zM865 615h1v1h-1zM865 619h1v1h-1zM865 624h1v1h-1zM865 629h1v1h-1zM972 175h1v1h-1zM972 179h1v1h-1zM972 184h1v1h-1zM972 188h1v1h-1zM972 193h1v1h-1zM972 197h1v1h-1zM972 202h1v1h-1zM972 206h1v1h-1zM972 211h1v1h-1zM972 215h1v1h-1zM972 220h1v1h-1zM972 224h1v1h-1zM972 229h1v1h-1zM972 234h1v1h-1zM972 238h1v1h-1zM972 243h1v1h-1zM972 247h1v1h-1zM972 252h1v1h-1zM972 256h1v1h-1zM972 261h1v1h-1zM972 265h1v1h-1zM972 270h1v1h-1zM972 274h1v1h-1zM972 279h1v1h-1zM972 283h1v1h-1zM972 288h1v1h-1zM972 293h1v1h-1zM972 297h1v1h-1zM972 302h1v1h-1zM972 306h1v1h-1zM972 311h1v1h-1zM972 315h1v1h-1zM972 320h1v1h-1zM972 324h1v1h-1zM972 329h1v1h-1zM972 333h1v1h-1zM972 338h1v1h-1zM972 342h1v1h-1zM972 347h1v1h-1zM972 352h1v1h-1zM972 356h1v1h-1zM972 361h1v1h-1zM972 365h1v1h-1zM972 370h1v1h-1zM972 374h1v1h-1zM972 379h1v1h-1zM972 383h1v1h-1zM972 388h1v1h-1zM972 392h1v1h-1zM972 397h1v1h-1zM972 402h1v1h-1zM972 406h1v1h-1zM972 411h1v1h-1zM972 415h1v1h-1zM972 420h1v1h-1zM972 424h1v1h-1zM972 429h1v1h-1zM972 433h1v1h-1zM972 438h1v1h-1zM972 442h1v1h-1zM972 447h1v1h-1zM972 451h1v1h-1zM972 456h1v1h-1zM972 461h1v1h-1zM972 465h1v1h-1zM972 470h1v1h-1zM972 474h1v1h-1zM972 479h1v1h-1zM972 483h1v1h-1zM972 488h1v1h-1zM972 492h1v1h-1zM972 497h1v1h-1zM972 501h1v1h-1zM972 506h1v1h-1zM972 510h1v1h-1zM972 515h1v1h-1zM972 520h1v1h-1zM972 524h1v1h-1zM972 529h1v1h-1zM972 533h1v1h-1zM972 538h1v1h-1zM972 542h1v1h-1zM972 547h1v1h-1zM972 551h1v1h-1zM972 556h1v1h-1zM972 560h1v1h-1zM972 565h1v1h-1zM972 569h1v1h-1zM972 574h1v1h-1zM972 579h1v1h-1zM972 583h1v1h-1zM972 588h1v1h-1zM972 592h1v1h-1zM972 597h1v1h-1zM972 601h1v1h-1zM972 606h1v1h-1zM972 610h1v1h-1zM972 615h1v1h-1zM972 619h1v1h-1zM972 624h1v1h-1zM972 629h1v1h-1zM1080 175h1v1h-1zM1080 179h1v1h-1zM1080 184h1v1h-1zM1080 188h1v1h-1zM1080 193h1v1h-1zM1080 197h1v1h-1zM1080 202h1v1h-1zM1080 206h1v1h-1zM1080 211h1v1h-1zM1080 215h1v1h-1zM1080 220h1v1h-1zM1080 224h1v1h-1zM1080 229h1v1h-1zM1080 234h1v1h-1zM1080 238h1v1h-1zM1080 243h1v1h-1zM1080 247h1v1h-1zM1080 252h1v1h-1zM1080 256h1v1h-1zM1080 261h1v1h-1zM1080 265h1v1h-1zM1080 270h1v1h-1zM1080 274h1v1h-1zM1080 279h1v1h-1zM1080 283h1v1h-1zM1080 288h1v1h-1zM1080 293h1v1h-1zM1080 297h1v1h-1zM1080 302h1v1h-1zM1080 306h1v1h-1zM1080 311h1v1h-1zM1080 315h1v1h-1zM1080 320h1v1h-1zM1080 324h1v1h-1zM1080 329h1v1h-1zM1080 333h1v1h-1zM1080 338h1v1h-1zM1080 342h1v1h-1zM1080 347h1v1h-1zM1080 352h1v1h-1zM1080 356h1v1h-1zM1080 361h1v1h-1zM1080 365h1v1h-1zM1080 370h1v1h-1zM1080 374h1v1h-1zM1080 379h1v1h-1zM1080 383h1v1h-1zM1080 388h1v1h-1zM1080 392h1v1h-1zM1080 397h1v1h-1zM1080 402h1v1h-1zM1080 406h1v1h-1zM1080 411h1v1h-1zM1080 415h1v1h-1zM1080 420h1v1h-1zM1080 424h1v1h-1zM1080 429h1v1h-1zM1080 433h1v1h-1zM1080 438h1v1h-1zM1080 442h1v1h-1zM1080 447h1v1h-1zM1080 451h1v1h-1zM1080 456h1v1h-1zM1080 461h1v1h-1zM1080 465h1v1h-1zM1080 470h1v1h-1zM1080 474h1v1h-1zM1080 479h1v1h-1zM1080 483h1v1h-1zM1080 488h1v1h-1zM1080 492h1v1h-1zM1080 497h1v1h-1zM1080 501h1v1h-1zM1080 506h1v1h-1zM1080 510h1v1h-1zM1080 515h1v1h-1zM1080 520h1v1h-1zM1080 524h1v1h-1zM1080 529h1v1h-1zM1080 533h1v1h-1zM1080 538h1v1h-1zM1080 542h1v1h-1zM1080 547h1v1h-1zM1080 551h1v1h-1zM1080 556h1v1h-1zM1080 560h1v1h-1zM1080 565h1v1h-1zM1080 569h1v1h-1zM1080 574h1v1h-1zM1080 579h1v1h-1zM1080 583h1v1h-1zM1080 588h1v1h-1zM1080 592h1v1h-1zM1080 597h1v1h-1zM1080 601h1v1h-1zM1080 606h1v1h-1zM1080 610h1v1h-1zM1080 615h1v1h-1zM1080 619h1v1h-1zM1080 624h1v1h-1zM1080 629h1v1h-1zM18 175h1v1h-1zM29 175h1v1h-1zM40 175h1v1h-1zM50 175h1v1h-1zM61 175h1v1h-1zM72 175h1v1h-1zM83 175h1v1h-1zM93 175h1v1h-1zM104 175h1v1h-1zM125 175h1v1h-1zM136 175h1v1h-1zM147 175h1v1h-1zM158 175h1v1h-1zM168 175h1v1h-1zM179 175h1v1h-1zM190 175h1v1h-1zM200 175h1v1h-1zM211 175h1v1h-1zM233 175h1v1h-1zM243 175h1v1h-1zM254 175h1v1h-1zM265 175h1v1h-1zM276 175h1v1h-1zM286 175h1v1h-1zM297 175h1v1h-1zM308 175h1v1h-1zM318 175h1v1h-1zM340 175h1v1h-1zM351 175h1v1h-1zM361 175h1v1h-1zM372 175h1v1h-1zM383 175h1v1h-1zM393 175h1v1h-1zM404 175h1v1h-1zM415 175h1v1h-1zM426 175h1v1h-1zM447 175h1v1h-1zM458 175h1v1h-1zM468 175h1v1h-1zM479 175h1v1h-1zM490 175h1v1h-1zM501 175h1v1h-1zM511 175h1v1h-1zM522 175h1v1h-1zM533 175h1v1h-1zM554 175h1v1h-1zM565 175h1v1h-1zM576 175h1v1h-1zM586 175h1v1h-1zM597 175h1v1h-1zM608 175h1v1h-1zM619 175h1v1h-1zM629 175h1v1h-1zM640 175h1v1h-1zM661 175h1v1h-1zM672 175h1v1h-1zM683 175h1v1h-1zM694 175h1v1h-1zM704 175h1v1h-1zM715 175h1v1h-1zM726 175h1v1h-1zM736 175h1v1h-1zM747 175h1v1h-1zM769 175h1v1h-1zM779 175h1v1h-1zM790 175h1v1h-1zM801 175h1v1h-1zM812 175h1v1h-1zM822 175h1v1h-1zM833 175h1v1h-1zM844 175h1v1h-1zM854 175h1v1h-1zM876 175h1v1h-1zM887 175h1v1h-1zM897 175h1v1h-1zM908 175h1v1h-1zM919 175h1v1h-1zM929 175h1v1h-1zM940 175h1v1h-1zM951 175h1v1h-1zM962 175h1v1h-1zM983 175h1v1h-1zM994 175h1v1h-1zM1004 175h1v1h-1zM1015 175h1v1h-1zM1026 175h1v1h-1zM1037 175h1v1h-1zM1047 175h1v1h-1zM1058 175h1v1h-1zM1069 175h1v1h-1zM18 220h1v1h-1zM29 220h1v1h-1zM40 220h1v1h-1zM50 220h1v1h-1zM61 220h1v1h-1zM72 220h1v1h-1zM83 220h1v1h-1zM93 220h1v1h-1zM104 220h1v1h-1zM125 220h1v1h-1zM136 220h1v1h-1zM147 220h1v1h-1zM158 220h1v1h-1zM168 220h1v1h-1zM179 220h1v1h-1zM190 220h1v1h-1zM200 220h1v1h-1zM211 220h1v1h-1zM233 220h1v1h-1zM243 220h1v1h-1zM254 220h1v1h-1zM265 220h1v1h-1zM276 220h1v1h-1zM286 220h1v1h-1zM297 220h1v1h-1zM308 220h1v1h-1zM318 220h1v1h-1zM340 220h1v1h-1zM351 220h1v1h-1zM361 220h1v1h-1zM372 220h1v1h-1zM383 220h1v1h-1zM393 220h1v1h-1zM404 220h1v1h-1zM415 220h1v1h-1zM426 220h1v1h-1zM447 220h1v1h-1zM458 220h1v1h-1zM468 220h1v1h-1zM479 220h1v1h-1zM490 220h1v1h-1zM501 220h1v1h-1zM511 220h1v1h-1zM522 220h1v1h-1zM533 220h1v1h-1zM554 220h1v1h-1zM565 220h1v1h-1zM576 220h1v1h-1zM586 220h1v1h-1zM597 220h1v1h-1zM608 220h1v1h-1zM619 220h1v1h-1zM629 220h1v1h-1zM640 220h1v1h-1zM661 220h1v1h-1zM672 220h1v1h-1zM683 220h1v1h-1zM694 220h1v1h-1zM704 220h1v1h-1zM715 220h1v1h-1zM726 220h1v1h-1zM736 220h1v1h-1zM747 220h1v1h-1zM769 220h1v1h-1zM779 220h1v1h-1zM790 220h1v1h-1zM801 220h1v1h-1zM812 220h1v1h-1zM822 220h1v1h-1zM833 220h1v1h-1zM844 220h1v1h-1zM854 220h1v1h-1zM876 220h1v1h-1zM887 220h1v1h-1zM897 220h1v1h-1zM908 220h1v1h-1zM919 220h1v1h-1zM929 220h1v1h-1zM940 220h1v1h-1zM951 220h1v1h-1zM962 220h1v1h-1zM983 220h1v1h-1zM994 220h1v1h-1zM1004 220h1v1h-1zM1015 220h1v1h-1zM1026 220h1v1h-1zM1037 220h1v1h-1zM1047 220h1v1h-1zM1058 220h1v1h-1zM1069 220h1v1h-1zM18 265h1v1h-1zM29 265h1v1h-1zM40 265h1v1h-1zM50 265h1v1h-1zM61 265h1v1h-1zM72 265h1v1h-1zM83 265h1v1h-1zM93 265h1v1h-1zM104 265h1v1h-1zM125 265h1v1h-1zM136 265h1v1h-1zM147 265h1v1h-1zM158 265h1v1h-1zM168 265h1v1h-1zM179 265h1v1h-1zM190 265h1v1h-1zM200 265h1v1h-1zM211 265h1v1h-1zM233 265h1v1h-1zM243 265h1v1h-1zM254 265h1v1h-1zM265 265h1v1h-1zM276 265h1v1h-1zM286 265h1v1h-1zM297 265h1v1h-1zM308 265h1v1h-1zM318 265h1v1h-1zM340 265h1v1h-1zM351 265h1v1h-1zM361 265h1v1h-1zM372 265h1v1h-1zM383 265h1v1h-1zM393 265h1v1h-1zM404 265h1v1h-1zM415 265h1v1h-1zM426 265h1v1h-1zM447 265h1v1h-1zM458 265h1v1h-1zM468 265h1v1h-1zM479 265h1v1h-1zM490 265h1v1h-1zM501 265h1v1h-1zM511 265h1v1h-1zM522 265h1v1h-1zM533 265h1v1h-1zM554 265h1v1h-1zM565 265h1v1h-1zM576 265h1v1h-1zM586 265h1v1h-1zM597 265h1v1h-1zM608 265h1v1h-1zM619 265h1v1h-1zM629 265h1v1h-1zM640 265h1v1h-1zM661 265h1v1h-1zM672 265h1v1h-1zM683 265h1v1h-1zM694 265h1v1h-1zM704 265h1v1h-1zM715 265h1v1h-1zM726 265h1v1h-1zM736 265h1v1h-1zM747 265h1v1h-1zM769 265h1v1h-1zM779 265h1v1h-1zM790 265h1v1h-1zM801 265h1v1h-1zM812 265h1v1h-1zM822 265h1v1h-1zM833 265h1v1h-1zM844 265h1v1h-1zM854 265h1v1h-1zM876 265h1v1h-1zM887 265h1v1h-1zM897 265h1v1h-1zM908 265h1v1h-1zM919 265h1v1h-1zM929 265h1v1h-1zM940 265h1v1h-1zM951 265h1v1h-1zM962 265h1v1h-1zM983 265h1v1h-1zM994 265h1v1h-1zM1004 265h1v1h-1zM1015 265h1v1h-1zM1026 265h1v1h-1zM1037 265h1v1h-1zM1047 265h1v1h-1zM1058 265h1v1h-1zM1069 265h1v1h-1zM18 311h1v1h-1zM29 311h1v1h-1zM40 311h1v1h-1zM50 311h1v1h-1zM61 311h1v1h-1zM72 311h1v1h-1zM83 311h1v1h-1zM93 311h1v1h-1zM104 311h1v1h-1zM125 311h1v1h-1zM136 311h1v1h-1zM147 311h1v1h-1zM158 311h1v1h-1zM168 311h1v1h-1zM179 311h1v1h-1zM190 311h1v1h-1zM200 311h1v1h-1zM211 311h1v1h-1zM233 311h1v1h-1zM243 311h1v1h-1zM254 311h1v1h-1zM265 311h1v1h-1zM276 311h1v1h-1zM286 311h1v1h-1zM297 311h1v1h-1zM308 311h1v1h-1zM318 311h1v1h-1zM340 311h1v1h-1zM351 311h1v1h-1zM361 311h1v1h-1zM372 311h1v1h-1zM383 311h1v1h-1zM393 311h1v1h-1zM404 311h1v1h-1zM415 311h1v1h-1zM426 311h1v1h-1zM447 311h1v1h-1zM458 311h1v1h-1zM468 311h1v1h-1zM479 311h1v1h-1zM490 311h1v1h-1zM501 311h1v1h-1zM511 311h1v1h-1zM522 311h1v1h-1zM533 311h1v1h-1zM554 311h1v1h-1zM565 311h1v1h-1zM576 311h1v1h-1zM586 311h1v1h-1zM597 311h1v1h-1zM608 311h1v1h-1zM619 311h1v1h-1zM629 311h1v1h-1zM640 311h1v1h-1zM661 311h1v1h-1zM672 311h1v1h-1zM683 311h1v1h-1zM694 311h1v1h-1zM704 311h1v1h-1zM715 311h1v1h-1zM726 311h1v1h-1zM736 311h1v1h-1zM747 311h1v1h-1zM769 311h1v1h-1zM779 311h1v1h-1zM790 311h1v1h-1zM801 311h1v1h-1zM812 311h1v1h-1zM822 311h1v1h-1zM833 311h1v1h-1zM844 311h1v1h-1zM854 311h1v1h-1zM876 311h1v1h-1zM887 311h1v1h-1zM897 311h1v1h-1zM908 311h1v1h-1zM919 311h1v1h-1zM929 311h1v1h-1zM940 311h1v1h-1zM951 311h1v1h-1zM962 311h1v1h-1zM983 311h1v1h-1zM994 311h1v1h-1zM1004 311h1v1h-1zM1015 311h1v1h-1zM1026 311h1v1h-1zM1037 311h1v1h-1zM1047 311h1v1h-1zM1058 311h1v1h-1zM1069 311h1v1h-1zM18 356h1v1h-1zM29 356h1v1h-1zM40 356h1v1h-1zM50 356h1v1h-1zM61 356h1v1h-1zM72 356h1v1h-1zM83 356h1v1h-1zM93 356h1v1h-1zM104 356h1v1h-1zM125 356h1v1h-1zM136 356h1v1h-1zM147 356h1v1h-1zM158 356h1v1h-1zM168 356h1v1h-1zM179 356h1v1h-1zM190 356h1v1h-1zM200 356h1v1h-1zM211 356h1v1h-1zM233 356h1v1h-1zM243 356h1v1h-1zM254 356h1v1h-1zM265 356h1v1h-1zM276 356h1v1h-1zM286 356h1v1h-1zM297 356h1v1h-1zM308 356h1v1h-1zM318 356h1v1h-1zM340 356h1v1h-1zM351 356h1v1h-1zM361 356h1v1h-1zM372 356h1v1h-1zM383 356h1v1h-1zM393 356h1v1h-1zM404 356h1v1h-1zM415 356h1v1h-1zM426 356h1v1h-1zM447 356h1v1h-1zM458 356h1v1h-1zM468 356h1v1h-1zM479 356h1v1h-1zM490 356h1v1h-1zM501 356h1v1h-1zM511 356h1v1h-1zM522 356h1v1h-1zM533 356h1v1h-1zM554 356h1v1h-1zM565 356h1v1h-1zM576 356h1v1h-1zM586 356h1v1h-1zM597 356h1v1h-1zM608 356h1v1h-1zM619 356h1v1h-1zM629 356h1v1h-1zM640 356h1v1h-1zM661 356h1v1h-1zM672 356h1v1h-1zM683 356h1v1h-1zM694 356h1v1h-1zM704 356h1v1h-1zM715 356h1v1h-1zM726 356h1v1h-1zM736 356h1v1h-1zM747 356h1v1h-1zM769 356h1v1h-1zM779 356h1v1h-1zM790 356h1v1h-1zM801 356h1v1h-1zM812 356h1v1h-1zM822 356h1v1h-1zM833 356h1v1h-1zM844 356h1v1h-1zM854 356h1v1h-1zM876 356h1v1h-1zM887 356h1v1h-1zM897 356h1v1h-1zM908 356h1v1h-1zM919 356h1v1h-1zM929 356h1v1h-1zM940 356h1v1h-1zM951 356h1v1h-1zM962 356h1v1h-1zM983 356h1v1h-1zM994 356h1v1h-1zM1004 356h1v1h-1zM1015 356h1v1h-1zM1026 356h1v1h-1zM1037 356h1v1h-1zM1047 356h1v1h-1zM1058 356h1v1h-1zM1069 356h1v1h-1zM18 402h1v1h-1zM29 402h1v1h-1zM40 402h1v1h-1zM50 402h1v1h-1zM61 402h1v1h-1zM72 402h1v1h-1zM83 402h1v1h-1zM93 402h1v1h-1zM104 402h1v1h-1zM125 402h1v1h-1zM136 402h1v1h-1zM147 402h1v1h-1zM158 402h1v1h-1zM168 402h1v1h-1zM179 402h1v1h-1zM190 402h1v1h-1zM200 402h1v1h-1zM211 402h1v1h-1zM233 402h1v1h-1zM243 402h1v1h-1zM254 402h1v1h-1zM265 402h1v1h-1zM276 402h1v1h-1zM286 402h1v1h-1zM297 402h1v1h-1zM308 402h1v1h-1zM318 402h1v1h-1zM340 402h1v1h-1zM351 402h1v1h-1zM361 402h1v1h-1zM372 402h1v1h-1zM383 402h1v1h-1zM393 402h1v1h-1zM404 402h1v1h-1zM415 402h1v1h-1zM426 402h1v1h-1zM447 402h1v1h-1zM458 402h1v1h-1zM468 402h1v1h-1zM479 402h1v1h-1zM490 402h1v1h-1zM501 402h1v1h-1zM511 402h1v1h-1zM522 402h1v1h-1zM533 402h1v1h-1zM554 402h1v1h-1zM565 402h1v1h-1zM576 402h1v1h-1zM586 402h1v1h-1zM597 402h1v1h-1zM608 402h1v1h-1zM619 402h1v1h-1zM629 402h1v1h-1zM640 402h1v1h-1zM661 402h1v1h-1zM672 402h1v1h-1zM683 402h1v1h-1zM694 402h1v1h-1zM704 402h1v1h-1zM715 402h1v1h-1zM726 402h1v1h-1zM736 402h1v1h-1zM747 402h1v1h-1zM769 402h1v1h-1zM779 402h1v1h-1zM790 402h1v1h-1zM801 402h1v1h-1zM812 402h1v1h-1zM822 402h1v1h-1zM833 402h1v1h-1zM844 402h1v1h-1zM854 402h1v1h-1zM876 402h1v1h-1zM887 402h1v1h-1zM897 402h1v1h-1zM908 402h1v1h-1zM919 402h1v1h-1zM929 402h1v1h-1zM940 402h1v1h-1zM951 402h1v1h-1zM962 402h1v1h-1zM983 402h1v1h-1zM994 402h1v1h-1zM1004 402h1v1h-1zM1015 402h1v1h-1zM1026 402h1v1h-1zM1037 402h1v1h-1zM1047 402h1v1h-1zM1058 402h1v1h-1zM1069 402h1v1h-1zM18 447h1v1h-1zM29 447h1v1h-1zM40 447h1v1h-1zM50 447h1v1h-1zM61 447h1v1h-1zM72 447h1v1h-1zM83 447h1v1h-1zM93 447h1v1h-1zM104 447h1v1h-1zM125 447h1v1h-1zM136 447h1v1h-1zM147 447h1v1h-1zM158 447h1v1h-1zM168 447h1v1h-1zM179 447h1v1h-1zM190 447h1v1h-1zM200 447h1v1h-1zM211 447h1v1h-1zM233 447h1v1h-1zM243 447h1v1h-1zM254 447h1v1h-1zM265 447h1v1h-1zM276 447h1v1h-1zM286 447h1v1h-1zM297 447h1v1h-1zM308 447h1v1h-1zM318 447h1v1h-1zM340 447h1v1h-1zM351 447h1v1h-1zM361 447h1v1h-1zM372 447h1v1h-1zM383 447h1v1h-1zM393 447h1v1h-1zM404 447h1v1h-1zM415 447h1v1h-1zM426 447h1v1h-1zM447 447h1v1h-1zM458 447h1v1h-1zM468 447h1v1h-1zM479 447h1v1h-1zM490 447h1v1h-1zM501 447h1v1h-1zM511 447h1v1h-1zM522 447h1v1h-1zM533 447h1v1h-1zM554 447h1v1h-1zM565 447h1v1h-1zM576 447h1v1h-1zM586 447h1v1h-1zM597 447h1v1h-1zM608 447h1v1h-1zM619 447h1v1h-1zM629 447h1v1h-1zM640 447h1v1h-1zM661 447h1v1h-1zM672 447h1v1h-1zM683 447h1v1h-1zM694 447h1v1h-1zM704 447h1v1h-1zM715 447h1v1h-1zM726 447h1v1h-1zM736 447h1v1h-1zM747 447h1v1h-1zM769 447h1v1h-1zM779 447h1v1h-1zM790 447h1v1h-1zM801 447h1v1h-1zM812 447h1v1h-1zM822 447h1v1h-1zM833 447h1v1h-1zM844 447h1v1h-1zM854 447h1v1h-1zM876 447h1v1h-1zM887 447h1v1h-1zM897 447h1v1h-1zM908 447h1v1h-1zM919 447h1v1h-1zM929 447h1v1h-1zM940 447h1v1h-1zM951 447h1v1h-1zM962 447h1v1h-1zM983 447h1v1h-1zM994 447h1v1h-1zM1004 447h1v1h-1zM1015 447h1v1h-1zM1026 447h1v1h-1zM1037 447h1v1h-1zM1047 447h1v1h-1zM1058 447h1v1h-1zM1069 447h1v1h-1zM18 492h1v1h-1zM29 492h1v1h-1zM40 492h1v1h-1zM50 492h1v1h-1zM61 492h1v1h-1zM72 492h1v1h-1zM83 492h1v1h-1zM93 492h1v1h-1zM104 492h1v1h-1zM125 492h1v1h-1zM136 492h1v1h-1zM147 492h1v1h-1zM158 492h1v1h-1zM168 492h1v1h-1zM179 492h1v1h-1zM190 492h1v1h-1zM200 492h1v1h-1zM211 492h1v1h-1zM233 492h1v1h-1zM243 492h1v1h-1zM254 492h1v1h-1zM265 492h1v1h-1zM276 492h1v1h-1zM286 492h1v1h-1zM297 492h1v1h-1zM308 492h1v1h-1zM318 492h1v1h-1zM340 492h1v1h-1zM351 492h1v1h-1zM361 492h1v1h-1zM372 492h1v1h-1zM383 492h1v1h-1zM393 492h1v1h-1zM404 492h1v1h-1zM415 492h1v1h-1zM426 492h1v1h-1zM447 492h1v1h-1zM458 492h1v1h-1zM468 492h1v1h-1zM479 492h1v1h-1zM490 492h1v1h-1zM501 492h1v1h-1zM511 492h1v1h-1zM522 492h1v1h-1zM533 492h1v1h-1zM554 492h1v1h-1zM565 492h1v1h-1zM576 492h1v1h-1zM586 492h1v1h-1zM597 492h1v1h-1zM608 492h1v1h-1zM619 492h1v1h-1zM629 492h1v1h-1zM640 492h1v1h-1zM661 492h1v1h-1zM672 492h1v1h-1zM683 492h1v1h-1zM694 492h1v1h-1zM704 492h1v1h-1zM715 492h1v1h-1zM726 492h1v1h-1zM736 492h1v1h-1zM747 492h1v1h-1zM769 492h1v1h-1zM779 492h1v1h-1zM790 492h1v1h-1zM801 492h1v1h-1zM812 492h1v1h-1zM822 492h1v1h-1zM833 492h1v1h-1zM844 492h1v1h-1zM854 492h1v1h-1zM876 492h1v1h-1zM887 492h1v1h-1zM897 492h1v1h-1zM908 492h1v1h-1zM919 492h1v1h-1zM929 492h1v1h-1zM940 492h1v1h-1zM951 492h1v1h-1zM962 492h1v1h-1zM983 492h1v1h-1zM994 492h1v1h-1zM1004 492h1v1h-1zM1015 492h1v1h-1zM1026 492h1v1h-1zM1037 492h1v1h-1zM1047 492h1v1h-1zM1058 492h1v1h-1zM1069 492h1v1h-1zM18 538h1v1h-1zM29 538h1v1h-1zM40 538h1v1h-1zM50 538h1v1h-1zM61 538h1v1h-1zM72 538h1v1h-1zM83 538h1v1h-1zM93 538h1v1h-1zM104 538h1v1h-1zM125 538h1v1h-1zM136 538h1v1h-1zM147 538h1v1h-1zM158 538h1v1h-1zM168 538h1v1h-1zM179 538h1v1h-1zM190 538h1v1h-1zM200 538h1v1h-1zM211 538h1v1h-1zM233 538h1v1h-1zM243 538h1v1h-1zM254 538h1v1h-1zM265 538h1v1h-1zM276 538h1v1h-1zM286 538h1v1h-1zM297 538h1v1h-1zM308 538h1v1h-1zM318 538h1v1h-1zM340 538h1v1h-1zM351 538h1v1h-1zM361 538h1v1h-1zM372 538h1v1h-1zM383 538h1v1h-1zM393 538h1v1h-1zM404 538h1v1h-1zM415 538h1v1h-1zM426 538h1v1h-1zM447 538h1v1h-1zM458 538h1v1h-1zM468 538h1v1h-1zM479 538h1v1h-1zM490 538h1v1h-1zM501 538h1v1h-1zM511 538h1v1h-1zM522 538h1v1h-1zM533 538h1v1h-1zM554 538h1v1h-1zM565 538h1v1h-1zM576 538h1v1h-1zM586 538h1v1h-1zM597 538h1v1h-1zM608 538h1v1h-1zM619 538h1v1h-1zM629 538h1v1h-1zM640 538h1v1h-1zM661 538h1v1h-1zM672 538h1v1h-1zM683 538h1v1h-1zM694 538h1v1h-1zM704 538h1v1h-1zM715 538h1v1h-1zM726 538h1v1h-1zM736 538h1v1h-1zM747 538h1v1h-1zM769 538h1v1h-1zM779 538h1v1h-1zM790 538h1v1h-1zM801 538h1v1h-1zM812 538h1v1h-1zM822 538h1v1h-1zM833 538h1v1h-1zM844 538h1v1h-1zM854 538h1v1h-1zM876 538h1v1h-1zM887 538h1v1h-1zM897 538h1v1h-1zM908 538h1v1h-1zM919 538h1v1h-1zM929 538h1v1h-1zM940 538h1v1h-1zM951 538h1v1h-1zM962 538h1v1h-1zM983 538h1v1h-1zM994 538h1v1h-1zM1004 538h1v1h-1zM1015 538h1v1h-1zM1026 538h1v1h-1zM1037 538h1v1h-1zM1047 538h1v1h-1zM1058 538h1v1h-1zM1069 538h1v1h-1zM18 583h1v1h-1zM29 583h1v1h-1zM40 583h1v1h-1zM50 583h1v1h-1zM61 583h1v1h-1zM72 583h1v1h-1zM83 583h1v1h-1zM93 583h1v1h-1zM104 583h1v1h-1zM125 583h1v1h-1zM136 583h1v1h-1zM147 583h1v1h-1zM158 583h1v1h-1zM168 583h1v1h-1zM179 583h1v1h-1zM190 583h1v1h-1zM200 583h1v1h-1zM211 583h1v1h-1zM233 583h1v1h-1zM243 583h1v1h-1zM254 583h1v1h-1zM265 583h1v1h-1zM276 583h1v1h-1zM286 583h1v1h-1zM297 583h1v1h-1zM308 583h1v1h-1zM318 583h1v1h-1zM340 583h1v1h-1zM351 583h1v1h-1zM361 583h1v1h-1zM372 583h1v1h-1zM383 583h1v1h-1zM393 583h1v1h-1zM404 583h1v1h-1zM415 583h1v1h-1zM426 583h1v1h-1zM447 583h1v1h-1zM458 583h1v1h-1zM468 583h1v1h-1zM479 583h1v1h-1zM490 583h1v1h-1zM501 583h1v1h-1zM511 583h1v1h-1zM522 583h1v1h-1zM533 583h1v1h-1zM554 583h1v1h-1zM565 583h1v1h-1zM576 583h1v1h-1zM586 583h1v1h-1zM597 583h1v1h-1zM608 583h1v1h-1zM619 583h1v1h-1zM629 583h1v1h-1zM640 583h1v1h-1zM661 583h1v1h-1zM672 583h1v1h-1zM683 583h1v1h-1zM694 583h1v1h-1zM704 583h1v1h-1zM715 583h1v1h-1zM726 583h1v1h-1zM736 583h1v1h-1zM747 583h1v1h-1zM769 583h1v1h-1zM779 583h1v1h-1zM790 583h1v1h-1zM801 583h1v1h-1zM812 583h1v1h-1zM822 583h1v1h-1zM833 583h1v1h-1zM844 583h1v1h-1zM854 583h1v1h-1zM876 583h1v1h-1zM887 583h1v1h-1zM897 583h1v1h-1zM908 583h1v1h-1zM919 583h1v1h-1zM929 583h1v1h-1zM940 583h1v1h-1zM951 583h1v1h-1zM962 583h1v1h-1zM983 583h1v1h-1zM994 583h1v1h-1zM1004 583h1v1h-1zM1015 583h1v1h-1zM1026 583h1v1h-1zM1037 583h1v1h-1zM1047 583h1v1h-1zM1058 583h1v1h-1zM1069 583h1v1h-1zM18 629h1v1h-1zM29 629h1v1h-1zM40 629h1v1h-1zM50 629h1v1h-1zM61 629h1v1h-1zM72 629h1v1h-1zM83 629h1v1h-1zM93 629h1v1h-1zM104 629h1v1h-1zM125 629h1v1h-1zM136 629h1v1h-1zM147 629h1v1h-1zM158 629h1v1h-1zM168 629h1v1h-1zM179 629h1v1h-1zM190 629h1v1h-1zM200 629h1v1h-1zM211 629h1v1h-1zM233 629h1v1h-1zM243 629h1v1h-1zM254 629h1v1h-1zM265 629h1v1h-1zM276 629h1v1h-1zM286 629h1v1h-1zM297 629h1v1h-1zM308 629h1v1h-1zM318 629h1v1h-1zM340 629h1v1h-1zM351 629h1v1h-1zM361 629h1v1h-1zM372 629h1v1h-1zM383 629h1v1h-1zM393 629h1v1h-1zM404 629h1v1h-1zM415 629h1v1h-1zM426 629h1v1h-1zM447 629h1v1h-1zM458 629h1v1h-1zM468 629h1v1h-1zM479 629h1v1h-1zM490 629h1v1h-1zM501 629h1v1h-1zM511 629h1v1h-1zM522 629h1v1h-1zM533 629h1v1h-1zM554 629h1v1h-1zM565 629h1v1h-1zM576 629h1v1h-1zM586 629h1v1h-1zM597 629h1v1h-1zM608 629h1v1h-1zM619 629h1v1h-1zM629 629h1v1h-1zM640 629h1v1h-1zM661 629h1v1h-1zM672 629h1v1h-1zM683 629h1v1h-1zM694 629h1v1h-1zM704 629h1v1h-1zM715 629h1v1h-1zM726 629h1v1h-1zM736 629h1v1h-1zM747 629h1v1h-1zM769 629h1v1h-1zM779 629h1v1h-1zM790 629h1v1h-1zM801 629h1v1h-1zM812 629h1v1h-1zM822 629h1v1h-1zM833 629h1v1h-1zM844 629h1v1h-1zM854 629h1v1h-1zM876 629h1v1h-1zM887 629h1v1h-1zM897 629h1v1h-1zM908 629h1v1h-1zM919 629h1v1h-1zM929 629h1v1h-1zM940 629h1v1h-1zM951 629h1v1h-1zM962 629h1v1h-1zM983 629h1v1h-1zM994 629h1v1h-1zM1004 629h1v1h-1zM1015 629h1v1h-1zM1026 629h1v1h-1zM1037 629h1v1h-1zM1047 629h1v1h-1zM1058 629h1v1h-1zM1069 629h1v1h-1z"/>
<text x="13.86" y="346.9" font-size="13.8" fill="#cc9900" textLength="99.69" lengthAdjust="spacingAndGlyphs" stroke="#cc9900" stroke-width="0.1" >joint.2.acc-cmd</text>
<text x="12.92" y="363.3" font-size="13.8" fill="#cc9900" textLength="51.03" lengthAdjust="spacingAndGlyphs" stroke="#cc9900" stroke-width="0.1" >500 /div</text>
<text x="13.86" y="379.7" font-size="13.8" fill="#66cc00" textLength="99.69" lengthAdjust="spacingAndGlyphs" stroke="#66cc00" stroke-width="0.1" >joint.1.acc-cmd</text>
<text x="12.92" y="396.1" font-size="13.8" fill="#66cc00" textLength="51.03" lengthAdjust="spacingAndGlyphs" stroke="#66cc00" stroke-width="0.1" >500 /div</text>
<text x="13.86" y="412.5" font-size="13.8" fill="#cc0000" textLength="99.69" lengthAdjust="spacingAndGlyphs" stroke="#cc0000" stroke-width="0.1" >joint.0.acc-cmd</text>
<text x="12.91" y="428.9" font-size="13.8" fill="#cc0000" textLength="43.34" lengthAdjust="spacingAndGlyphs" stroke="#cc0000" stroke-width="0.1" >50 /div</text>
<text x="13.87" y="445.3" font-size="13.8" fill="#00cccc" textLength="97.81" lengthAdjust="spacingAndGlyphs" stroke="#00cccc" stroke-width="0.1" >joint.0.vel-cmd</text>
<text x="12.91" y="461.7" font-size="13.8" fill="#00cccc" textLength="43.34" lengthAdjust="spacingAndGlyphs" stroke="#00cccc" stroke-width="0.1" >50 /div</text>
<text x="13.87" y="478.1" font-size="13.8" fill="#6600cc" textLength="97.81" lengthAdjust="spacingAndGlyphs" stroke="#6600cc" stroke-width="0.1" >joint.1.vel-cmd</text>
<text x="12.38" y="494.5" font-size="13.8" fill="#6600cc" textLength="51.57" lengthAdjust="spacingAndGlyphs" stroke="#6600cc" stroke-width="0.1" >100 /div</text>
<text x="13.87" y="510.9" font-size="13.8" fill="#00cc33" textLength="97.81" lengthAdjust="spacingAndGlyphs" stroke="#00cc33" stroke-width="0.1" >joint.2.vel-cmd</text>
<text x="12.38" y="527.3" font-size="13.8" fill="#00cc33" textLength="51.57" lengthAdjust="spacingAndGlyphs" stroke="#00cc33" stroke-width="0.1" >100 /div</text>
<polyline fill="none" stroke="#dc0000" stroke-width="2.5" shape-rendering="crispEdges" points="447,401 584,368.5 679,391 721,412 817,435.5 951,403.5"/>
<rect x="465" y="396" width="2" height="4" fill="#dc0000"/>
<rect x="719.5" y="406" width="1.5" height="6" fill="#dc0000"/>
<rect x="446" y="405" width="88" height="2" fill="#00cccc"/>
<rect x="534" y="404" width="41" height="2" fill="#00cccc"/>
<rect x="575" y="403" width="82" height="2" fill="#00cccc"/>
<rect x="657" y="402" width="116" height="2" fill="#00cccc"/>
<rect x="773" y="402" width="21" height="2" fill="#00cccc"/>
<rect x="794" y="403" width="33" height="2" fill="#00cccc"/>
<rect x="827" y="404" width="41" height="2" fill="#00cccc"/>
<rect x="868" y="405" width="114" height="2" fill="#00cccc"/>
<rect x="981" y="403" width="2" height="4" fill="#00cccc"/>
<rect x="465" y="399" width="24" height="2" fill="#66cc00"/>
<rect x="506" y="399" width="23" height="2" fill="#66cc00"/>
<rect x="547" y="398" width="23" height="2" fill="#66cc00"/>
<rect x="598" y="398" width="23" height="2" fill="#66cc00"/>
<rect x="640" y="399" width="22" height="2" fill="#66cc00"/>
<rect x="780" y="398" width="23" height="2" fill="#66cc00"/>
<rect x="832" y="398" width="23" height="2" fill="#66cc00"/>
<rect x="912" y="401" width="48" height="2" fill="#66cc00"/>
<rect x="8" y="401" width="438" height="3" fill="#8c8c8c"/>
<rect x="446" y="402" width="94" height="2" fill="#8c8c8c"/>
<rect x="540" y="401" width="15" height="2" fill="#8c8c8c"/>
<rect x="555" y="401" width="102" height="2" fill="#8c8c8c"/>
<rect x="657" y="402" width="137" height="2" fill="#8c8c8c"/>
<rect x="794" y="402" width="53" height="2" fill="#8c8c8c"/>
<rect x="847" y="401" width="24" height="3" fill="#8c8c8c"/>
<rect x="871" y="402" width="74" height="2" fill="#8c8c8c"/>
<rect x="446" y="401" width="44" height="2" fill="#d49a00"/>
<rect x="490" y="400" width="50" height="2" fill="#d49a00"/>
<rect x="540" y="399" width="30" height="2" fill="#d49a00"/>
<rect x="570" y="398" width="28" height="2" fill="#d49a00"/>
<rect x="598" y="399" width="42" height="2" fill="#d49a00"/>
<rect x="640" y="400" width="100" height="2" fill="#d49a00"/>
<rect x="740" y="399" width="22" height="2" fill="#d49a00"/>
<rect x="762" y="400" width="18" height="2" fill="#d49a00"/>
<rect x="780" y="398" width="52" height="2" fill="#d49a00"/>
<rect x="832" y="398" width="39" height="2" fill="#d49a00"/>
<rect x="871" y="401" width="41" height="1" fill="#d49a00"/>
<rect x="912" y="401" width="70" height="2" fill="#d49a00"/>
<rect x="982" y="403" width="99" height="1" fill="#d49a00"/>
<rect x="446" y="403" width="109" height="2" fill="#00cc33"/>
<rect x="555" y="402" width="73" height="2" fill="#00cc33"/>
<rect x="628" y="401" width="144" height="2" fill="#00cc33"/>
<rect x="772" y="400" width="68" height="2" fill="#00cc33"/>
<rect x="840" y="399" width="142" height="2" fill="#00cc33"/>
<rect x="981" y="399" width="2" height="3" fill="#00cc33"/>
<rect x="982" y="401" width="99" height="2" fill="#00cc33"/>
<rect x="428" y="725" width="1" height="28" fill="#b0b0b0" />
<defs><linearGradient id="hnd" x1="0" y1="0" x2="1" y2="0"><stop offset="0" stop-color="#d6d6d6"/><stop offset="1" stop-color="#f2f2f2"/></linearGradient><linearGradient id="tray" x1="0" y1="0" x2="0" y2="1"><stop offset="0" stop-color="#cdcdcd"/><stop offset="0.5" stop-color="#efefef"/><stop offset="1" stop-color="#ffffff"/></linearGradient><radialGradient id="mag" cx="0.45" cy="0.35" r="0.7"><stop offset="0" stop-color="#bfeefc"/><stop offset="1" stop-color="#3cb6e6"/></radialGradient></defs>
<rect x="253" y="726" width="990" height="27" fill="url(#tray)"/>
<rect x="428" y="726" width="26" height="27" fill="url(#hnd)"/>
<rect x="454" y="726" width="304" height="27" fill="#f5f5f3"/>
<rect x="253" y="725" width="990" height="1" fill="#777"/>
<rect x="428" y="726" width="1" height="27" fill="#b8b8b8"/>
<rect x="758" y="726" width="1" height="27" fill="#b0aca8"/>
<rect x="444" y="734" width="1.2" height="3.5" fill="#888"/><rect x="446.8" y="734" width="1.2" height="3.5" fill="#888"/><rect x="450.3" y="734" width="1.3" height="9" fill="#888"/>
<rect x="457" y="729" width="42" height="24" fill="#00a8e0"/><rect x="457" y="747" width="42" height="6" fill="#4b5b67"/><rect x="457" y="747" width="42" height="1" fill="#2b3842"/>
<rect x="505.5" y="731" width="1.2" height="22" fill="#7a7a7a"/><rect x="705.5" y="731" width="1.2" height="22" fill="#7a7a7a"/>
<rect x="513" y="729" width="42" height="24" fill="#00a8e0"/>
<clipPath id="gc534"><rect x="513" y="729" width="42" height="24"/></clipPath>
<path d="M544.35 737.71 L544.91 739.48 L548.58 739.43 L548.58 744.57 L544.91 744.52 L544.35 746.29 L543.50 747.94 L546.12 750.49 L542.49 754.12 L539.94 751.50 L538.29 752.35 L536.52 752.91 L536.57 756.58 L531.43 756.58 L531.48 752.91 L529.71 752.35 L528.06 751.50 L525.51 754.12 L521.88 750.49 L524.50 747.94 L523.65 746.29 L523.09 744.52 L519.42 744.57 L519.42 739.43 L523.09 739.48 L523.65 737.71 L524.50 736.06 L521.88 733.51 L525.51 729.88 L528.06 732.50 L529.71 731.65 L531.48 731.09 L531.43 727.42 L536.57 727.42 L536.52 731.09 L538.29 731.65 L539.94 732.50 L542.49 729.88 L546.12 733.51 L543.50 736.06Z M541 742 A7 7 0 1 0 527 742 A7 7 0 1 0 541 742Z" fill="#bde9f6" fill-rule="evenodd" clip-path="url(#gc534)"/>
<rect x="559.5" y="728.5" width="45" height="26" rx="3" fill="#fbfbfb" stroke="#d4d0cc" stroke-width="1"/>
<rect x="561" y="729" width="42" height="24" fill="#00b6ee"/>
<clipPath id="gc582"><rect x="561" y="729" width="42" height="24"/></clipPath>
<path d="M592.35 737.71 L592.91 739.48 L596.58 739.43 L596.58 744.57 L592.91 744.52 L592.35 746.29 L591.50 747.94 L594.12 750.49 L590.49 754.12 L587.94 751.50 L586.29 752.35 L584.52 752.91 L584.57 756.58 L579.43 756.58 L579.48 752.91 L577.71 752.35 L576.06 751.50 L573.51 754.12 L569.88 750.49 L572.50 747.94 L571.65 746.29 L571.09 744.52 L567.42 744.57 L567.42 739.43 L571.09 739.48 L571.65 737.71 L572.50 736.06 L569.88 733.51 L573.51 729.88 L576.06 732.50 L577.71 731.65 L579.48 731.09 L579.43 727.42 L584.57 727.42 L584.52 731.09 L586.29 731.65 L587.94 732.50 L590.49 729.88 L594.12 733.51 L591.50 736.06Z M589 742 A7 7 0 1 0 575 742 A7 7 0 1 0 589 742Z" fill="#d4f6ff" fill-rule="evenodd" clip-path="url(#gc582)"/>
<rect x="609" y="729" width="42" height="24" fill="#00a8e0"/>
<clipPath id="gc630"><rect x="609" y="729" width="42" height="24"/></clipPath>
<path d="M640.35 737.71 L640.91 739.48 L644.58 739.43 L644.58 744.57 L640.91 744.52 L640.35 746.29 L639.50 747.94 L642.12 750.49 L638.49 754.12 L635.94 751.50 L634.29 752.35 L632.52 752.91 L632.57 756.58 L627.43 756.58 L627.48 752.91 L625.71 752.35 L624.06 751.50 L621.51 754.12 L617.88 750.49 L620.50 747.94 L619.65 746.29 L619.09 744.52 L615.42 744.57 L615.42 739.43 L619.09 739.48 L619.65 737.71 L620.50 736.06 L617.88 733.51 L621.51 729.88 L624.06 732.50 L625.71 731.65 L627.48 731.09 L627.43 727.42 L632.57 727.42 L632.52 731.09 L634.29 731.65 L635.94 732.50 L638.49 729.88 L642.12 733.51 L639.50 736.06Z M637 742 A7 7 0 1 0 623 742 A7 7 0 1 0 637 742Z" fill="#bde9f6" fill-rule="evenodd" clip-path="url(#gc630)"/>
<rect x="660" y="729" width="36" height="24" fill="#d4d8dc"/>
<rect x="663" y="729" width="6" height="6" fill="#5cc8f0"/>
<rect x="663" y="737" width="6" height="6" fill="#5cc8f0"/>
<rect x="663" y="745" width="6" height="6" fill="#5cc8f0"/>
<rect x="671" y="729" width="6" height="6" fill="#5cc8f0"/>
<rect x="671" y="737" width="6" height="6" fill="#5cc8f0"/>
<rect x="671" y="745" width="6" height="6" fill="#5cc8f0"/>
<rect x="679" y="729" width="6" height="6" fill="#5cc8f0"/>
<rect x="679" y="737" width="6" height="6" fill="#5cc8f0"/>
<rect x="679" y="745" width="6" height="6" fill="#5cc8f0"/>
<rect x="687" y="729" width="6" height="6" fill="#5cc8f0"/>
<rect x="687" y="737" width="6" height="6" fill="#5cc8f0"/>
<rect x="687" y="745" width="6" height="6" fill="#5cc8f0"/>
<line x1="682" y1="745" x2="693" y2="756" stroke="#2b3a42" stroke-width="4"/>
<circle cx="675" cy="738.5" r="9.5" fill="url(#mag)" stroke="#1f2a30" stroke-width="1.8"/>
<rect x="715.5" y="729" width="30" height="24" fill="#5d5d5d"/><rect x="716" y="730" width="29" height="2" fill="#8a8a8a"/>
<path d="M719 734 H752 L750.5 753 H718 Z" fill="#6e9fdb" stroke="#4a7fc4" stroke-width="1"/>
<path d="M577 734 L577 750 L580.5 746.5 L583.5 752.5 L586 751.5 L583 745.5 L588 745.5 Z" fill="#111" stroke="#fff" stroke-width="0.8"/>
<rect x="1226" y="726" width="12" height="27" fill="#cfcfcf"/><rect x="1241" y="726" width="2" height="27" fill="#d8d8d8"/>
</svg></body></html>
